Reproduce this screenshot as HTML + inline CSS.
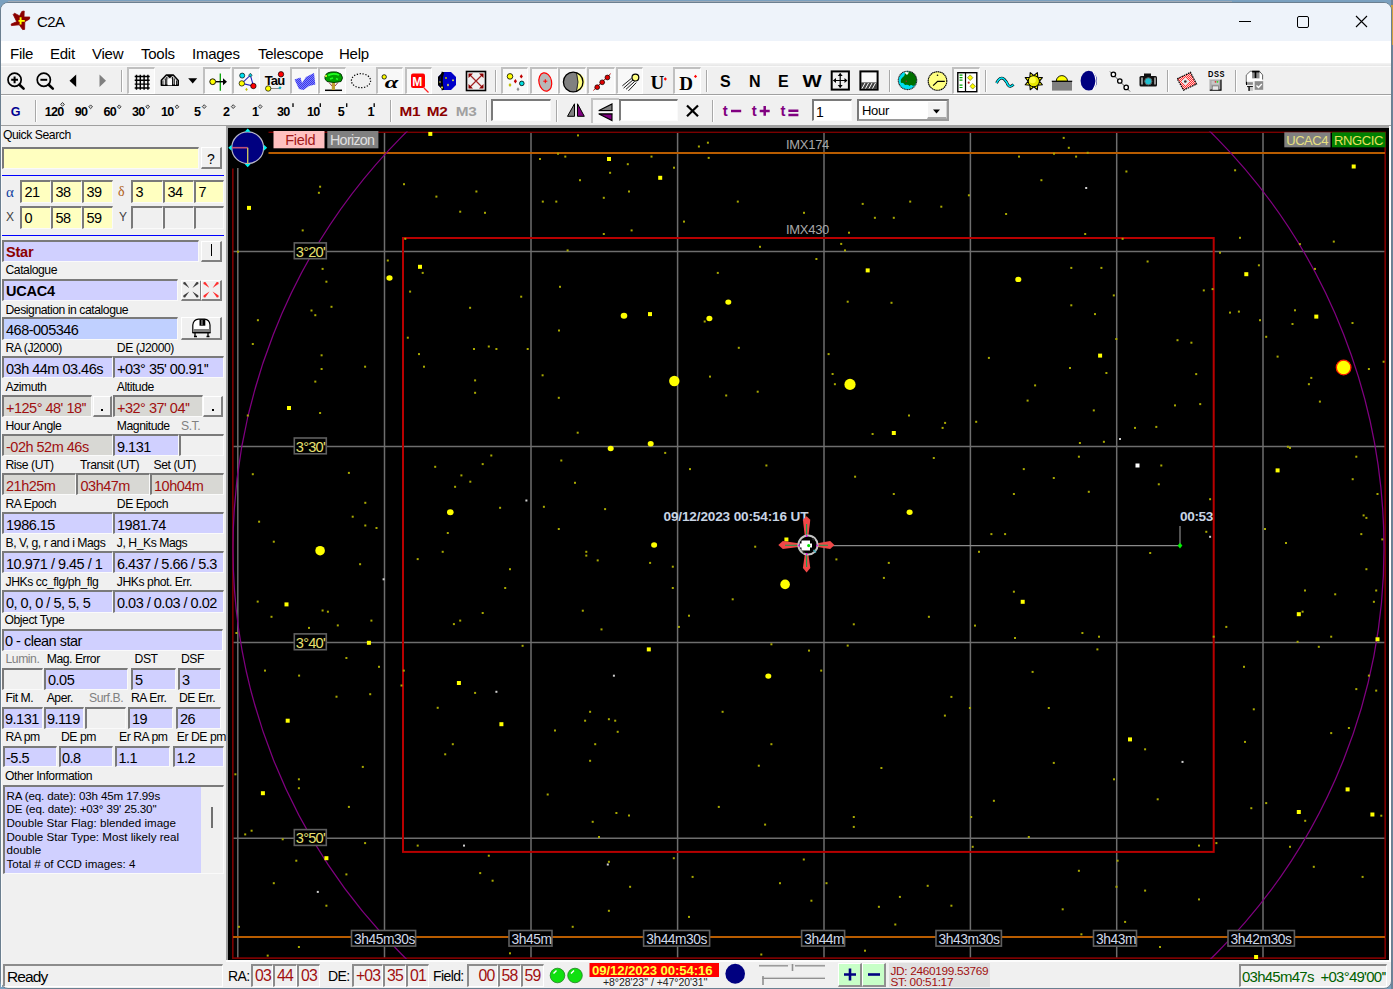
<!DOCTYPE html>
<html><head><meta charset="utf-8"><style>
html,body{margin:0;padding:0;width:1393px;height:989px;overflow:hidden;background:#f0f0f0;font-family:"Liberation Sans", sans-serif;}
#root{position:relative;width:1393px;height:989px;overflow:hidden}
#root div,#root span{position:absolute;white-space:pre;line-height:normal}
svg{position:absolute;left:0;top:0}
</style></head><body><div id="root">
<div style="left:0px;top:0px;width:1393px;height:989px;background:#7aa0bf"></div>
<div style="left:1391px;top:0px;width:2px;height:989px;background:#6c8499"></div>
<div style="left:1391px;top:5px;width:2px;height:40px;background:#d0a040"></div>
<div style="left:8px;top:1px;width:1224px;height:2px;background:linear-gradient(#8a98a8,#e0e0e0)"></div>
<div style="left:0px;top:2px;width:1392px;height:987px;background:#f0f0f0;border-radius:8px 8px 8px 8px;border:1px solid #6b7f90;box-sizing:border-box;overflow:hidden"></div>
<div style="left:1px;top:3px;width:1390px;height:38px;background:#eef3fa;border-radius:7px 7px 0 0"></div>
<svg style="position:absolute;left:0px;top:0px" width="40" height="40" viewBox="0 0 40 40"><path d="M21.8 11.5L24.2 11L24 17L29.8 17L29.3 19.2L24.8 21.7L24.6 29.4L22.6 29.6L19.3 24.8L11.4 25.6L11.2 24L16.7 21.7L13.2 14.5L14.5 13.2L19.6 15.9Z" fill="#8b0000" stroke="#8b0000" stroke-width="0.8" stroke-linejoin="round"/><path d="M18.5 20.9H24.8M20.6 17.2V24.6" stroke="#ffff00" stroke-width="1.9"/></svg>
<span style="left:37px;top:13.42px;font-size:15px;color:#000;font-weight:normal;letter-spacing:-0.6px">C2A</span>
<div style="left:1239px;top:21px;width:12px;height:1px;background:#000"></div>
<div style="left:1297px;top:16px;width:12px;height:12px;border:1px solid #000;border-radius:2px;box-sizing:border-box"></div>
<svg style="position:absolute;left:1355px;top:15px" width="13" height="13" viewBox="0 0 13 13"><path d="M1 1 L12 12 M12 1 L1 12" stroke="#000" stroke-width="1.1"/></svg>
<div style="left:1px;top:41px;width:1390px;height:22px;background:#fff"></div>
<div style="left:1px;top:63px;width:1390px;height:3px;background:linear-gradient(#f4f4f4,#e6e6e6)"></div>
<div style="left:1px;top:66px;width:1390px;height:1px;background:#fafafa"></div>
<span style="left:10px;top:45.42px;font-size:15px;color:#000;font-weight:normal;letter-spacing:-0.25px">File</span>
<span style="left:50px;top:45.42px;font-size:15px;color:#000;font-weight:normal;letter-spacing:-0.25px">Edit</span>
<span style="left:92px;top:45.42px;font-size:15px;color:#000;font-weight:normal;letter-spacing:-0.25px">View</span>
<span style="left:141px;top:45.42px;font-size:15px;color:#000;font-weight:normal;letter-spacing:-0.25px">Tools</span>
<span style="left:192px;top:45.42px;font-size:15px;color:#000;font-weight:normal;letter-spacing:-0.25px">Images</span>
<span style="left:258px;top:45.42px;font-size:15px;color:#000;font-weight:normal;letter-spacing:-0.25px">Telescope</span>
<span style="left:339px;top:45.42px;font-size:15px;color:#000;font-weight:normal;letter-spacing:-0.25px">Help</span>
<div style="left:1px;top:94px;width:1390px;height:1px;background:#a0a0a0"></div>
<div style="left:1px;top:95px;width:1390px;height:1px;background:#fff"></div>
<div style="left:1px;top:125px;width:1390px;height:1px;background:#a0a0a0"></div>
<div style="left:127px;top:67px;width:28px;height:27px;background:#f8f8f8;border-top:2px solid #c0c0c0;border-left:2px solid #c0c0c0;border-right:1px solid #fff;border-bottom:1px solid #fff;box-sizing:border-box"></div>
<div style="left:203px;top:67px;width:28px;height:27px;background:#f8f8f8;border-top:2px solid #c0c0c0;border-left:2px solid #c0c0c0;border-right:1px solid #fff;border-bottom:1px solid #fff;box-sizing:border-box"></div>
<div style="left:232px;top:67px;width:28px;height:27px;background:#f8f8f8;border-top:2px solid #c0c0c0;border-left:2px solid #c0c0c0;border-right:1px solid #fff;border-bottom:1px solid #fff;box-sizing:border-box"></div>
<div style="left:290px;top:67px;width:28px;height:27px;background:#f8f8f8;border-top:2px solid #c0c0c0;border-left:2px solid #c0c0c0;border-right:1px solid #fff;border-bottom:1px solid #fff;box-sizing:border-box"></div>
<div style="left:318px;top:67px;width:28px;height:27px;background:#f8f8f8;border-top:2px solid #c0c0c0;border-left:2px solid #c0c0c0;border-right:1px solid #fff;border-bottom:1px solid #fff;box-sizing:border-box"></div>
<div style="left:376px;top:67px;width:27px;height:27px;background:#f8f8f8;border-top:2px solid #c0c0c0;border-left:2px solid #c0c0c0;border-right:1px solid #fff;border-bottom:1px solid #fff;box-sizing:border-box"></div>
<div style="left:405px;top:67px;width:27px;height:27px;background:#f8f8f8;border-top:2px solid #c0c0c0;border-left:2px solid #c0c0c0;border-right:1px solid #fff;border-bottom:1px solid #fff;box-sizing:border-box"></div>
<div style="left:501px;top:67px;width:27px;height:27px;background:#f8f8f8;border-top:2px solid #c0c0c0;border-left:2px solid #c0c0c0;border-right:1px solid #fff;border-bottom:1px solid #fff;box-sizing:border-box"></div>
<div style="left:530px;top:67px;width:28px;height:27px;background:#f8f8f8;border-top:2px solid #c0c0c0;border-left:2px solid #c0c0c0;border-right:1px solid #fff;border-bottom:1px solid #fff;box-sizing:border-box"></div>
<div style="left:558px;top:67px;width:28px;height:27px;background:#f8f8f8;border-top:2px solid #c0c0c0;border-left:2px solid #c0c0c0;border-right:1px solid #fff;border-bottom:1px solid #fff;box-sizing:border-box"></div>
<div style="left:587px;top:67px;width:28px;height:27px;background:#f8f8f8;border-top:2px solid #c0c0c0;border-left:2px solid #c0c0c0;border-right:1px solid #fff;border-bottom:1px solid #fff;box-sizing:border-box"></div>
<div style="left:616px;top:67px;width:27px;height:27px;background:#f8f8f8;border-top:2px solid #c0c0c0;border-left:2px solid #c0c0c0;border-right:1px solid #fff;border-bottom:1px solid #fff;box-sizing:border-box"></div>
<div style="left:673px;top:67px;width:28px;height:27px;background:#f8f8f8;border-top:2px solid #c0c0c0;border-left:2px solid #c0c0c0;border-right:1px solid #fff;border-bottom:1px solid #fff;box-sizing:border-box"></div>
<div style="left:952px;top:67px;width:28px;height:27px;background:#f8f8f8;border-top:2px solid #c0c0c0;border-left:2px solid #c0c0c0;border-right:1px solid #fff;border-bottom:1px solid #fff;box-sizing:border-box"></div>
<div style="left:121px;top:70px;width:1px;height:22px;background:#a8a8a8"></div>
<div style="left:122px;top:70px;width:1px;height:22px;background:#fff"></div>
<div style="left:495px;top:70px;width:1px;height:22px;background:#a8a8a8"></div>
<div style="left:496px;top:70px;width:1px;height:22px;background:#fff"></div>
<div style="left:706px;top:70px;width:1px;height:22px;background:#a8a8a8"></div>
<div style="left:707px;top:70px;width:1px;height:22px;background:#fff"></div>
<div style="left:889px;top:70px;width:1px;height:22px;background:#a8a8a8"></div>
<div style="left:890px;top:70px;width:1px;height:22px;background:#fff"></div>
<div style="left:985px;top:70px;width:1px;height:22px;background:#a8a8a8"></div>
<div style="left:986px;top:70px;width:1px;height:22px;background:#fff"></div>
<div style="left:1167px;top:70px;width:1px;height:22px;background:#a8a8a8"></div>
<div style="left:1168px;top:70px;width:1px;height:22px;background:#fff"></div>
<div style="left:1235px;top:70px;width:1px;height:22px;background:#a8a8a8"></div>
<div style="left:1236px;top:70px;width:1px;height:22px;background:#fff"></div>
<svg style="position:absolute;left:0px;top:0px" width="1393" height="989" viewBox="0 0 1393 989"><circle cx="14.6" cy="79.8" r="6.6" fill="none" stroke="#000" stroke-width="1.7"/><path d="M11.2 79.8h6.8M14.6 76.4v6.8" stroke="#000" stroke-width="2"/><path d="M19.5 84.7L23.6 88.6" stroke="#000" stroke-width="2.6" stroke-linecap="round"/><circle cx="43.8" cy="79.8" r="6.6" fill="none" stroke="#000" stroke-width="1.7"/><path d="M40.4 79.8h6.8" stroke="#000" stroke-width="2"/><path d="M48.7 84.7L52.8 88.6" stroke="#000" stroke-width="2.6" stroke-linecap="round"/><path d="M69.5 80.8L76.2 74.6V87.1Z" fill="#000"/><path d="M99.5 74.6L106 80.8L99.5 87.1Z" fill="#808080"/><path d="M136.5 74.7v15M140.3 74.7v15M144.1 74.7v15M147.9 74.7v15M134.7 76.5h15M134.7 80.3h15M134.7 84.1h15M134.7 87.9h15" stroke="#000" stroke-width="1.45"/><path d="M161.3 85.3V80.3L166.3 75H173.3L178.3 80.5V85.3Z" fill="#c8c8c8" stroke="#000" stroke-width="1.4" stroke-linejoin="round"/><path d="M163 85V80.5M165.3 85V78.5M166.8 85V77M172.5 85V77M174.2 85V78.5M176.6 85V80.5" stroke="#000" stroke-width="0.9"/><path d="M164.2 85V80M175.5 85V80" stroke="#fff" stroke-width="0.8"/><path d="M167.6 85.2V79.5L169.8 78L172 79.5V85.2Z" fill="#fff"/><path d="M166.3 75H173.3L169.8 78.3Z" fill="#000"/><path d="M188.2 78.3H197.2L192.7 83.4Z" fill="#000"/><path d="M220.3 73.5V90.7" stroke="#00a000" stroke-width="1.3"/><path d="M216 81.7H224" stroke="#000" stroke-width="1.4"/><path d="M223 78.2L227 81.7L223 85.2Z" fill="#000"/><circle cx="212.7" cy="81.7" r="2.9" fill="#ffff00" stroke="#000" stroke-width="0.9"/><path d="M241.8 83.4L253.4 86L250.4 75.2Z" fill="none" stroke="#2020c0" stroke-width="1.1"/><circle cx="242.2" cy="75.6" r="2.5" fill="#00e0f0" stroke="#000" stroke-width="0.7"/><path d="M250.4 73.2L252.2 75.2L250.4 77.2L248.6 75.2Z" fill="#00c0d0" stroke="#000" stroke-width="0.5"/><circle cx="241.8" cy="83.4" r="2.7" fill="#ffff00" stroke="#000" stroke-width="0.7"/><circle cx="253.4" cy="86" r="2.7" fill="#ff0000" stroke="#000" stroke-width="0.7"/><path d="M246.5 87.7L247.8 89.4L246.5 91.1L245.2 89.4Z" fill="#c0c000"/><text x="264.8" y="84.8" font-family="Liberation Sans" font-weight="bold" font-size="13" letter-spacing="-0.9" fill="#000">Tau</text><circle cx="281" cy="74.3" r="2.7" fill="#ff0000" stroke="#000" stroke-width="0.7"/><path d="M268 88.5H280" stroke="#888" stroke-width="1"/><circle cx="268.2" cy="88.5" r="2.7" fill="#ffff00" stroke="#000" stroke-width="0.7"/><path d="M280 86.2L281.6 87.8L280 89.4L278.4 87.8Z" fill="#00b0c0"/><pattern id="chk" width="2" height="2" patternUnits="userSpaceOnUse"><rect width="2" height="2" fill="#8080ff"/><rect width="1" height="1" fill="#3a3ae8"/><rect x="1" y="1" width="1" height="1" fill="#3a3ae8"/></pattern><path d="M294.5 79.5L300.5 77.5L302 83L306 77L314 73L315.3 84.5L309 86L303.5 90L299 89Z" fill="url(#chk)"/><path d="M325 90.3H342" stroke="#000" stroke-width="1.5"/><path d="M331.8 90V81H335V90Z" fill="#c0a030"/><path d="M329 82.5L332 86M338 82.5L335 86" stroke="#a04040" stroke-width="1"/><path d="M325 79Q324 73 331 72Q337 71 341 74Q344 78 341 81.5Q334 83.5 327 81.5Z" fill="#00a000" stroke="#003000" stroke-width="0.9"/><path d="M328 75.5Q333 72.5 339 75M330 79l3-1M336 78.5l2 1" stroke="#20ff20" stroke-width="1.6" fill="none"/><circle cx="326" cy="76" r="1" fill="#ffff40"/><ellipse cx="361" cy="80.7" rx="9.6" ry="7" fill="none" stroke="#000" stroke-width="1.2" stroke-dasharray="1.3 1.6"/><circle cx="384.2" cy="76.9" r="2.2" fill="#ffff00" stroke="#000" stroke-width="0.8"/><text x="0" y="0" transform="translate(384.8 88.3) scale(1.45 1)" font-family="Liberation Serif" font-style="italic" font-weight="bold" font-size="17" fill="#000">α</text><rect x="411" y="73.5" width="14" height="14.5" rx="2" fill="#ff0000"/><text x="412.3" y="85.7" font-family="Liberation Sans" font-weight="bold" font-size="12" fill="#fff">M</text><path d="M424 88L428.5 92.5" stroke="#ff2020" stroke-width="1.3"/><path d="M443 72H451L456 77V85L451 90H443L438 85V77Z" fill="#0000c8"/><path d="M443 72Q436 81 443 90L438 85V77Z" fill="#000"/><path d="M443 72Q440 81 443 90" stroke="#000" stroke-width="2.5" fill="none"/><circle cx="446" cy="78" r="1" fill="#c0c000"/><path d="M448 83.5l1 1.5l-1 1.5l-1-1.5zM442 86l1 1.5l-1 1.5l-1-1.5zM453 79l1 1.3l-1 1.3l-1-1.3zM440 81l0.8 1l-0.8 1l-0.8-1z" fill="#ffff40"/><rect x="466.5" y="71.5" width="19" height="19" fill="#f0f0f0" stroke="#000" stroke-width="1.6"/><path d="M469.5 74.5L482.5 87.5M482.5 74.5L469.5 87.5" stroke="#a02020" stroke-width="1.2"/><path d="M468.5 73.5h4.5l-4.5 4.5zM483.5 73.5h-4.5l4.5 4.5zM468.5 88.5h4.5l-4.5-4.5zM483.5 88.5h-4.5l4.5-4.5z" fill="#8b0000"/><circle cx="510" cy="76.4" r="2.8" fill="#ffff00" stroke="#000" stroke-width="0.8"/><path d="M521.3 74.2l1.6 2.2l-1.6 2.2l-1.6-2.2zM515.4 79l1.6 2.2l-1.6 2.2l-1.6-2.2z" fill="#c00000"/><circle cx="521.8" cy="83.4" r="2.3" fill="#00e0e0" stroke="#000" stroke-width="0.8"/><path d="M510 83l1.5 2l-1.5 2l-1.5-2z" fill="#c0c000"/><path d="M518 87.3l1.5 2l-1.5 2l-1.5-2z" fill="#909090"/><ellipse cx="545.3" cy="82" rx="6.3" ry="9.3" transform="rotate(-12 545.3 82)" fill="#b8b8b8" stroke="#ff0000" stroke-width="1.2"/><path d="M543.3 81.2h4M545.3 79.2v4" stroke="#ff0000" stroke-width="1"/><circle cx="573.2" cy="82" r="9.8" fill="#808080"/><path d="M576.5 72.5A9.6 9.6 0 0 1 576.5 91.5Q580 82 576.5 72.5Z" fill="#ffff80"/><circle cx="573.2" cy="82" r="9.8" fill="none" stroke="#000" stroke-width="1.3"/><path d="M576.5 73Q579.5 82 576.5 91" stroke="#000" stroke-width="0.7" fill="none"/><path d="M593.4 90.4L610.7 73.7" stroke="#c00000" stroke-width="1"/><circle cx="597.2" cy="87.2" r="2.4" fill="#e00000" stroke="#000" stroke-width="0.7"/><circle cx="602.2" cy="82.3" r="2.4" fill="#e00000" stroke="#000" stroke-width="0.7"/><circle cx="607.4" cy="77.5" r="2.4" fill="#e00000" stroke="#000" stroke-width="0.7"/><path d="M631.5 78.3L622.4 85.8M633 79.9L623.6 88.1M634.7 81.4L626 89.3M636.3 82.6L628.4 90.9" stroke="#000" stroke-width="0.9"/><circle cx="635.4" cy="77.6" r="3.4" fill="#ffff80" stroke="#000" stroke-width="1.2"/><text x="650.5" y="88.8" font-family="Liberation Serif" font-weight="bold" font-size="19" fill="#000">U</text><path d="M665.3 77.3l1.6 1.7l-1.6 1.7l-1.6-1.7z" fill="#ff0000"/><text x="679.3" y="89.8" font-family="Liberation Serif" font-weight="bold" font-size="19" fill="#000">D</text><path d="M695.5 74.7l1.6 1.7l-1.6 1.7l-1.6-1.7z" fill="#ff0000"/><text x="720" y="87.3" font-family="Liberation Sans" font-weight="bold" font-size="16" fill="#000">S</text><text x="749" y="87.3" font-family="Liberation Sans" font-weight="bold" font-size="16" fill="#000">N</text><text x="778" y="87.3" font-family="Liberation Sans" font-weight="bold" font-size="16" fill="#000">E</text><text transform="translate(802.4 87.3) scale(1.27 1)" font-family="Liberation Sans" font-weight="bold" font-size="16" fill="#000">W</text><rect x="831.7" y="71.4" width="17.2" height="18.2" fill="#f0f0f0" stroke="#000" stroke-width="2"/><path d="M840.2 73.5v14M833.5 80.5h13.5" stroke="#000" stroke-width="1.2"/><path d="M840.2 73l-2.5 3h5zM840.2 88l-2.5-3h5zM833 80.5l3-2.5v5zM847.5 80.5l-3-2.5v5z" fill="#000"/><rect x="860.4" y="71.4" width="17.2" height="18.2" fill="#f8f8f8" stroke="#000" stroke-width="2"/><rect x="861" y="82.4" width="16" height="6.5" fill="#404040"/><path d="M862 88.5l3-5.5M865.5 88.5l3-5.5M869 88.5l3-5.5M872.5 88.5l3-5.5" stroke="#fff" stroke-width="1"/><circle cx="907.5" cy="80.4" r="9.2" fill="#00e0f0"/><path d="M905 72Q910 71 913 73Q917 76 916.5 81Q916 85 913 86Q911 84 909.5 86Q908 84 905 85Q903 82 901 83Q900 79 903 77Q905 76 905 72Z" fill="#007000"/><path d="M904 72.2Q907 71.5 909 72.5L907 75Z" fill="#fff"/><circle cx="906.3" cy="81.3" r="0.8" fill="#a02020"/><circle cx="907.5" cy="80.4" r="9.2" fill="none" stroke="#202020" stroke-width="1.1" stroke-dasharray="1.2 0.5"/><circle cx="937.5" cy="81" r="9.3" fill="#ffff80" stroke="#000" stroke-width="1.1" stroke-dasharray="1.5 0.4"/><path d="M933.1 85.6L937.6 81.3H944.8" stroke="#000" stroke-width="1.2" fill="none"/><circle cx="937.5" cy="75.2" r="0.8" fill="#000"/><rect x="957.8" y="72.7" width="19" height="19" fill="#fff" stroke="#000" stroke-width="1.4"/><path d="M965.5 72.7v19" stroke="#000" stroke-width="1.2"/><path d="M959.5 75.2h3M959.5 77.7h3M959.5 80.2h3M959.5 85.2h3M959.5 87.5h3" stroke="#00a000" stroke-width="1.2"/><path d="M970.2 74.9l2.7 2.8l-2.7 2.8l-2.7-2.8zM972.7 83.5l2.7 2.8l-2.7 2.8l-2.7-2.8z" fill="#ffff00" stroke="#606000" stroke-width="0.6"/><circle cx="968.7" cy="82.7" r="1.1" fill="#c02020"/><path d="M996.5 83Q1000 76 1004 79Q1007 82 1008 85Q1010 88 1013.5 84.5" fill="none" stroke="#000" stroke-width="2.8"/><path d="M996.5 83Q1000 76 1004 79Q1007 82 1008 85Q1010 88 1013.5 84.5" fill="none" stroke="#00e8f8" stroke-width="1.5"/><path d="M1039.30 81.05L1042.39 84.76L1037.58 85.19ZM1037.79 84.98L1037.36 89.79L1033.65 86.70ZM1033.95 86.70L1030.24 89.79L1029.81 84.98ZM1030.02 85.19L1025.21 84.76L1028.30 81.05ZM1028.30 81.35L1025.21 77.64L1030.02 77.21ZM1029.81 77.42L1030.24 72.61L1033.95 75.70ZM1033.65 75.70L1037.36 72.61L1037.79 77.42ZM1037.58 77.21L1042.39 77.64L1039.30 81.35Z" fill="#ffff00" stroke="#000" stroke-width="1.1" stroke-linejoin="round"/><circle cx="1033.8" cy="81.2" r="5.6" fill="#e8e800" stroke="#000" stroke-width="1"/><circle cx="1032.6" cy="80.0" r="3.2" fill="#ffff40"/><rect x="1052" y="81" width="20" height="9.6" fill="#808080"/><path d="M1051.8 81.3H1072.2" stroke="#000" stroke-width="1.2"/><path d="M1056.3 81A5.6 5.4 0 0 1 1067.5 81Z" fill="#ffff00" stroke="#000" stroke-width="0.9"/><ellipse cx="1088.8" cy="80.7" rx="8.2" ry="9.9" fill="#000080"/><path d="M1093 71.5Q1099 80.7 1093 90" stroke="#fff" stroke-width="1.2" fill="none"/><path d="M1110 71.5L1130 91.5" stroke="#404040" stroke-width="0.9"/><circle cx="1113.4" cy="74.4" r="2.2" fill="#fff" stroke="#000" stroke-width="1.3"/><circle cx="1119.8" cy="81" r="2.2" fill="#fff" stroke="#000" stroke-width="1.3"/><circle cx="1126.2" cy="87.4" r="2.2" fill="#fff" stroke="#000" stroke-width="1.3"/><rect x="1139.5" y="76" width="17.5" height="10.5" rx="1.5" fill="#101010"/><rect x="1144" y="73.5" width="7" height="3" fill="#101010"/><circle cx="1148.3" cy="81.3" r="3.6" fill="#20c0d0" stroke="#606060" stroke-width="1"/><rect x="1141" y="77.5" width="2" height="7" fill="#909090"/><rect x="1154" y="77.5" width="2" height="7" fill="#909090"/><pattern id="rchk" width="2" height="2" patternUnits="userSpaceOnUse"><rect width="2" height="2" fill="#ff3030"/><rect width="1" height="1" fill="#ffd0d0"/><rect x="1" y="1" width="1" height="1" fill="#ffd0d0"/></pattern><path d="M1177.2 78.8L1190.5 72.4L1196.5 84.1L1183.6 90.1Z" fill="url(#rchk)" stroke="#000" stroke-width="1.2" stroke-dasharray="1.6 0.8"/><path d="M1185.3 77.5L1189.3 81.5L1185.3 85.5L1181.3 81.5Z" fill="#e8e8e8"/><circle cx="1185.3" cy="81.5" r="1.3" fill="#303030"/><text x="1208" y="77" font-family="Liberation Sans" font-weight="bold" font-size="7.5" letter-spacing="0.5" fill="#000" transform="translate(1208 77) scale(1 1.15) translate(-1208 -77)">DSS</text><rect x="1209.5" y="79.3" width="11.4" height="11.3" fill="#a8a8a8"/><path d="M1209.8 90.2H1221V79.6" stroke="#000" stroke-width="1.2" fill="none"/><path d="M1209.8 90V79.5H1220.8" stroke="#d0d0d0" stroke-width="0.8" fill="none"/><rect x="1211.5" y="80.8" width="7.5" height="3.8" fill="#c8c8c8"/><circle cx="1215.5" cy="81.8" r="0.9" fill="#e03030"/><circle cx="1217.5" cy="81.8" r="0.9" fill="#20e020"/><rect x="1212.3" y="86" width="6" height="4" fill="#e8e8e8" stroke="#606060" stroke-width="0.5"/><path d="M1246.3 84V75.1L1250.3 71.3H1259.5L1262.6 75.1V79.5" fill="none" stroke="#404040" stroke-width="0.9"/><path d="M1246.8 75.3L1250.5 71.8H1259.3L1262.1 75.3V81H1246.8Z" fill="#fff"/><rect x="1252.1" y="72.2" width="7.4" height="6.2" fill="#8a8a8a"/><path d="M1252.1 71.6H1259.5M1255.5 72V78" stroke="#000" stroke-width="1.6"/><rect x="1246.3" y="82.2" width="6.6" height="2.6" fill="#8c8c8c"/><path d="M1246.5 82V85" stroke="#000" stroke-width="1"/><path d="M1247.1 86.6H1252.9" stroke="#000" stroke-width="1"/><rect x="1248.2" y="87" width="1.8" height="3.9" fill="#303030"/><rect x="1250" y="87" width="2.9" height="3.9" fill="#c8c8c8"/><rect x="1254.7" y="81.2" width="8.5" height="8.6" fill="#8c8c8c"/><path d="M1256.5 85.5L1258.5 87.5L1261.8 84" stroke="#fff" stroke-width="1.3" fill="none"/></svg>
<span style="left:10.8px;top:104.69px;font-size:12.5px;color:#000090;font-weight:bold;">G</span>
<div style="left:35px;top:100px;width:1px;height:22px;background:#a8a8a8"></div>
<div style="left:36px;top:100px;width:1px;height:22px;background:#fff"></div>
<span style="left:44.7px;top:104.80px;font-size:12.6px;color:#000;font-weight:bold;letter-spacing:-0.7px">120</span>
<span style="left:74.8px;top:104.80px;font-size:12.6px;color:#000;font-weight:bold;letter-spacing:-0.7px">90</span>
<span style="left:103.4px;top:104.80px;font-size:12.6px;color:#000;font-weight:bold;letter-spacing:-0.7px">60</span>
<span style="left:132px;top:104.80px;font-size:12.6px;color:#000;font-weight:bold;letter-spacing:-0.7px">30</span>
<span style="left:161px;top:104.80px;font-size:12.6px;color:#000;font-weight:bold;letter-spacing:-0.7px">10</span>
<span style="left:194px;top:104.80px;font-size:12.6px;color:#000;font-weight:bold;letter-spacing:-0.7px">5</span>
<span style="left:223px;top:104.80px;font-size:12.6px;color:#000;font-weight:bold;letter-spacing:-0.7px">2</span>
<span style="left:252px;top:104.80px;font-size:12.6px;color:#000;font-weight:bold;letter-spacing:-0.7px">1</span>
<span style="left:277px;top:104.80px;font-size:12.6px;color:#000;font-weight:bold;letter-spacing:-0.7px">30</span>
<span style="left:307px;top:104.80px;font-size:12.6px;color:#000;font-weight:bold;letter-spacing:-0.7px">10</span>
<span style="left:337.7px;top:104.80px;font-size:12.6px;color:#000;font-weight:bold;letter-spacing:-0.7px">5</span>
<span style="left:367.6px;top:104.80px;font-size:12.6px;color:#000;font-weight:bold;letter-spacing:-0.7px">1</span>
<div style="left:390px;top:100px;width:1px;height:22px;background:#a8a8a8"></div>
<div style="left:391px;top:100px;width:1px;height:22px;background:#fff"></div>
<div style="left:486px;top:100px;width:1px;height:22px;background:#a8a8a8"></div>
<div style="left:487px;top:100px;width:1px;height:22px;background:#fff"></div>
<div style="left:491px;top:99px;width:60px;height:22px;background:#fff;border-top:2px solid #7a7a7a;border-left:2px solid #7a7a7a;border-bottom:1px solid #fafafa;border-right:1px solid #fafafa;box-sizing:border-box"></div>
<div style="left:556px;top:100px;width:1px;height:22px;background:#a8a8a8"></div>
<div style="left:557px;top:100px;width:1px;height:22px;background:#fff"></div>
<div style="left:591px;top:98px;width:28px;height:25px;background:#f7f7f7;border-top:2px solid #c4c4c4;border-left:2px solid #c4c4c4;box-sizing:border-box"></div>
<div style="left:619px;top:99px;width:59px;height:22px;background:#fff;border-top:2px solid #7a7a7a;border-left:2px solid #7a7a7a;border-bottom:1px solid #fafafa;border-right:1px solid #fafafa;box-sizing:border-box"></div>
<div style="left:712px;top:100px;width:1px;height:22px;background:#a8a8a8"></div>
<div style="left:713px;top:100px;width:1px;height:22px;background:#fff"></div>
<div style="left:812px;top:99px;width:40px;height:22px;background:#fff;border-top:2px solid #7a7a7a;border-left:2px solid #7a7a7a;border-bottom:1px solid #fafafa;border-right:1px solid #fafafa;box-sizing:border-box"></div>
<span style="left:816px;top:103.83px;font-size:14px;color:#000;font-weight:normal;">1</span>
<div style="left:857px;top:99px;width:92px;height:22px;background:#fff;border-top:2px solid #7a7a7a;border-left:2px solid #7a7a7a;border-bottom:2px solid #9a9a9a;border-right:2px solid #9a9a9a;box-sizing:border-box"></div>
<span style="left:862px;top:103.44px;font-size:13px;color:#000;font-weight:normal;letter-spacing:-0.3px">Hour</span>
<div style="left:927px;top:101px;width:20px;height:18px;background:#f4f4f4;border-top:1px solid #fff;border-left:1px solid #fff;border-bottom:2px solid #a8a8a8;border-right:1px solid #d0d0d0;box-sizing:border-box"></div>
<svg style="position:absolute;left:0px;top:0px" width="1393" height="989" viewBox="0 0 1393 989"><path d="M62.5 102.5l1.9 1.9l-1.9 1.9l-1.9-1.9z" fill="#d0d0d0" stroke="#303030" stroke-width="0.9"/><path d="M90.6 104.89999999999999l1.9 1.9l-1.9 1.9l-1.9-1.9z" fill="#d0d0d0" stroke="#303030" stroke-width="0.9"/><path d="M119.2 104.89999999999999l1.9 1.9l-1.9 1.9l-1.9-1.9z" fill="#d0d0d0" stroke="#303030" stroke-width="0.9"/><path d="M147.7 104.89999999999999l1.9 1.9l-1.9 1.9l-1.9-1.9z" fill="#d0d0d0" stroke="#303030" stroke-width="0.9"/><path d="M177 104.89999999999999l1.9 1.9l-1.9 1.9l-1.9-1.9z" fill="#d0d0d0" stroke="#303030" stroke-width="0.9"/><path d="M204.2 104.69999999999999l1.9 1.9l-1.9 1.9l-1.9-1.9z" fill="#d0d0d0" stroke="#303030" stroke-width="0.9"/><path d="M233.2 104.69999999999999l1.9 1.9l-1.9 1.9l-1.9-1.9z" fill="#d0d0d0" stroke="#303030" stroke-width="0.9"/><path d="M260.2 104.69999999999999l1.9 1.9l-1.9 1.9l-1.9-1.9z" fill="#d0d0d0" stroke="#303030" stroke-width="0.9"/><path d="M293 103.3v3.8" stroke="#101010" stroke-width="1.4"/><path d="M320.3 103.3v3.8" stroke="#101010" stroke-width="1.4"/><path d="M346.7 103.3v3.8" stroke="#101010" stroke-width="1.4"/><path d="M374.2 103.3v3.8" stroke="#101010" stroke-width="1.4"/><text transform="translate(399.5 116.2) scale(1.28 1)" font-family="Liberation Sans" font-weight="bold" font-size="12" letter-spacing="-0.3" fill="#8b0000">M1</text><text transform="translate(426.8 116.2) scale(1.28 1)" font-family="Liberation Sans" font-weight="bold" font-size="12" letter-spacing="-0.3" fill="#8b0000">M2</text><text transform="translate(455.8 116.2) scale(1.28 1)" font-family="Liberation Sans" font-weight="bold" font-size="12" letter-spacing="-0.3" fill="#a0a0a0">M3</text><path d="M567.5 116.3L574.5 103.8V116.3Z" fill="#808080" stroke="#000" stroke-width="1"/><path d="M577.5 103.8L584.3 116.3H577.5Z" fill="#800080" stroke="#000" stroke-width="1"/><path d="M612 104V110.5H599Z" fill="#808080" stroke="#000" stroke-width="1.1"/><path d="M612 120.5V114H599Z" fill="#800080" stroke="#000" stroke-width="1.1"/><path d="M598.5 110.7H612.5M598.5 113.8H612.5" stroke="#000" stroke-width="0.8"/><path d="M687 105.5L698 116.3M698 105.5L687 116.3" stroke="#000" stroke-width="2.2"/><text x="722.8" y="116.2" font-family="Liberation Sans" font-weight="bold" font-size="15" fill="#800080">t</text><text x="751.8" y="116.2" font-family="Liberation Sans" font-weight="bold" font-size="15" fill="#800080">t</text><text x="780.6" y="116.2" font-family="Liberation Sans" font-weight="bold" font-size="15" fill="#800080">t</text><path d="M731 110.9H741.2M759.7 110.9H769.7M764.7 106V115.8M788.4 110.7H798.4M788.4 114.9H798.4" stroke="#800080" stroke-width="2.5"/><path d="M933 109.5H940L936.5 113.5Z" fill="#000"/></svg>
<span style="left:3px;top:127.96px;font-size:12.2px;color:#000;font-weight:normal;letter-spacing:-0.45px">Quick Search</span>
<div style="left:2px;top:147px;width:197px;height:22px;background:#ffffc0;border-top:2px solid #7a7a7a;border-left:2px solid #7a7a7a;border-bottom:1px solid #fafafa;border-right:1px solid #fafafa;box-sizing:border-box"></div>
<div style="left:201px;top:147px;width:21px;height:22px;background:#f0f0f0;border-top:1px solid #fff;border-left:1px solid #fff;border-bottom:2px solid #808080;border-right:2px solid #808080;box-sizing:border-box"></div>
<span style="left:207px;top:151.33px;font-size:14px;color:#000;font-weight:normal;">?</span>
<div style="left:2px;top:174.6px;width:222px;height:1.6px;background:#0000ff"></div>
<svg style="position:absolute;left:0px;top:0px" width="1393" height="989" viewBox="0 0 1393 989"><text x="6" y="197" font-family="Liberation Serif" font-size="15" fill="#1040a0">α</text><text x="118" y="196" font-family="Liberation Serif" font-size="14" fill="#b06020">δ</text></svg>
<div style="left:20px;top:180px;width:31px;height:23px;background:#ffffc0;border-top:2px solid #7a7a7a;border-left:2px solid #7a7a7a;border-bottom:1px solid #fafafa;border-right:1px solid #fafafa;box-sizing:border-box"></div>
<div style="left:51px;top:180px;width:31px;height:23px;background:#ffffc0;border-top:2px solid #7a7a7a;border-left:2px solid #7a7a7a;border-bottom:1px solid #fafafa;border-right:1px solid #fafafa;box-sizing:border-box"></div>
<div style="left:82px;top:180px;width:31px;height:23px;background:#ffffc0;border-top:2px solid #7a7a7a;border-left:2px solid #7a7a7a;border-bottom:1px solid #fafafa;border-right:1px solid #fafafa;box-sizing:border-box"></div>
<div style="left:131px;top:180px;width:32px;height:23px;background:#ffffc0;border-top:2px solid #7a7a7a;border-left:2px solid #7a7a7a;border-bottom:1px solid #fafafa;border-right:1px solid #fafafa;box-sizing:border-box"></div>
<div style="left:163px;top:180px;width:31px;height:23px;background:#ffffc0;border-top:2px solid #7a7a7a;border-left:2px solid #7a7a7a;border-bottom:1px solid #fafafa;border-right:1px solid #fafafa;box-sizing:border-box"></div>
<div style="left:194px;top:180px;width:30px;height:23px;background:#ffffc0;border-top:2px solid #7a7a7a;border-left:2px solid #7a7a7a;border-bottom:1px solid #fafafa;border-right:1px solid #fafafa;box-sizing:border-box"></div>
<span style="left:24.5px;top:184.18px;font-size:14.5px;color:#000;font-weight:normal;letter-spacing:-0.5px">21</span>
<span style="left:55.5px;top:184.18px;font-size:14.5px;color:#000;font-weight:normal;letter-spacing:-0.5px">38</span>
<span style="left:86.5px;top:184.18px;font-size:14.5px;color:#000;font-weight:normal;letter-spacing:-0.5px">39</span>
<span style="left:135.5px;top:184.18px;font-size:14.5px;color:#000;font-weight:normal;letter-spacing:-0.5px">3</span>
<span style="left:167.5px;top:184.18px;font-size:14.5px;color:#000;font-weight:normal;letter-spacing:-0.5px">34</span>
<span style="left:198.5px;top:184.18px;font-size:14.5px;color:#000;font-weight:normal;letter-spacing:-0.5px">7</span>
<span style="left:6px;top:209.64px;font-size:12px;color:#404040;font-weight:normal;">X</span>
<span style="left:119px;top:209.64px;font-size:12px;color:#404040;font-weight:normal;">Y</span>
<div style="left:20px;top:206px;width:31px;height:23px;background:#ffffc0;border-top:2px solid #7a7a7a;border-left:2px solid #7a7a7a;border-bottom:1px solid #fafafa;border-right:1px solid #fafafa;box-sizing:border-box"></div>
<div style="left:51px;top:206px;width:31px;height:23px;background:#ffffc0;border-top:2px solid #7a7a7a;border-left:2px solid #7a7a7a;border-bottom:1px solid #fafafa;border-right:1px solid #fafafa;box-sizing:border-box"></div>
<div style="left:82px;top:206px;width:31px;height:23px;background:#ffffc0;border-top:2px solid #7a7a7a;border-left:2px solid #7a7a7a;border-bottom:1px solid #fafafa;border-right:1px solid #fafafa;box-sizing:border-box"></div>
<div style="left:131px;top:206px;width:32px;height:23px;background:#f0f0f0;border-top:2px solid #7a7a7a;border-left:2px solid #7a7a7a;border-bottom:1px solid #fafafa;border-right:1px solid #fafafa;box-sizing:border-box"></div>
<div style="left:163px;top:206px;width:31px;height:23px;background:#f0f0f0;border-top:2px solid #7a7a7a;border-left:2px solid #7a7a7a;border-bottom:1px solid #fafafa;border-right:1px solid #fafafa;box-sizing:border-box"></div>
<div style="left:194px;top:206px;width:30px;height:23px;background:#f0f0f0;border-top:2px solid #7a7a7a;border-left:2px solid #7a7a7a;border-bottom:1px solid #fafafa;border-right:1px solid #fafafa;box-sizing:border-box"></div>
<span style="left:24.5px;top:210.18px;font-size:14.5px;color:#000;font-weight:normal;letter-spacing:-0.5px">0</span>
<span style="left:55.5px;top:210.18px;font-size:14.5px;color:#000;font-weight:normal;letter-spacing:-0.5px">58</span>
<span style="left:86.5px;top:210.18px;font-size:14.5px;color:#000;font-weight:normal;letter-spacing:-0.5px">59</span>
<div style="left:2px;top:234.6px;width:222px;height:1.6px;background:#0000ff"></div>
<div style="left:2px;top:240px;width:197px;height:22px;background:#d0d0ff;border-top:2px solid #7a7a7a;border-left:2px solid #7a7a7a;border-bottom:1px solid #fafafa;border-right:1px solid #fafafa;box-sizing:border-box"></div>
<span style="left:6px;top:244.38px;font-size:14.5px;color:#8b0000;font-weight:bold;letter-spacing:-0.2px">Star</span>
<div style="left:201px;top:241px;width:21px;height:21px;background:#f0f0f0;border-top:1px solid #fff;border-left:1px solid #fff;border-bottom:2px solid #808080;border-right:2px solid #808080;box-sizing:border-box"></div>
<div style="left:211px;top:244px;width:1.2px;height:12px;background:#000"></div>
<span style="left:5.5px;top:262.56px;font-size:12.2px;color:#000;font-weight:normal;letter-spacing:-0.45px">Catalogue</span>
<div style="left:2px;top:279px;width:176px;height:22px;background:#d0d0ff;border-top:2px solid #7a7a7a;border-left:2px solid #7a7a7a;border-bottom:1px solid #fafafa;border-right:1px solid #fafafa;box-sizing:border-box"></div>
<span style="left:6px;top:283.38px;font-size:14.5px;color:#000;font-weight:bold;letter-spacing:-0.2px">UCAC4</span>
<div style="left:181px;top:280px;width:21px;height:21px;background:#f0f0f0;border-top:1px solid #fff;border-left:1px solid #fff;border-bottom:2px solid #808080;border-right:2px solid #808080;box-sizing:border-box"></div>
<div style="left:201px;top:280px;width:21px;height:21px;background:#f0f0f0;border-top:1px solid #fff;border-left:1px solid #fff;border-bottom:2px solid #808080;border-right:2px solid #808080;box-sizing:border-box"></div>
<span style="left:5.5px;top:302.96px;font-size:12.2px;color:#000;font-weight:normal;letter-spacing:-0.45px">Designation in catalogue</span>
<div style="left:2px;top:317px;width:176px;height:23px;background:#c0d0ff;border-top:2px solid #7a7a7a;border-left:2px solid #7a7a7a;border-bottom:1px solid #fafafa;border-right:1px solid #fafafa;box-sizing:border-box"></div>
<span style="left:6px;top:321.88px;font-size:14.5px;color:#000;font-weight:normal;letter-spacing:-0.5px">468-005346</span>
<div style="left:181px;top:317px;width:41px;height:23px;background:#f0f0f0;border-top:1px solid #fff;border-left:1px solid #fff;border-bottom:2px solid #808080;border-right:2px solid #808080;box-sizing:border-box"></div>
<svg style="position:absolute;left:0px;top:0px" width="1393" height="989" viewBox="0 0 1393 989"><path d="M183.58 284.12L189.30 288.00L185.42 282.28ZM183.20 283.20a1.3 1.3 0 1 0 2.6 0a1.3 1.3 0 1 0 -2.6 0ZM196.28 282.28L192.40 288.00L198.12 284.12ZM195.90 283.20a1.3 1.3 0 1 0 2.6 0a1.3 1.3 0 1 0 -2.6 0ZM185.42 297.12L189.30 291.40L183.58 295.28ZM183.20 296.20a1.3 1.3 0 1 0 2.6 0a1.3 1.3 0 1 0 -2.6 0ZM198.12 295.28L192.40 291.40L196.28 297.12ZM195.90 296.20a1.3 1.3 0 1 0 2.6 0a1.3 1.3 0 1 0 -2.6 0Z" fill="#404040"/><path d="M203.78 284.12L209.50 288.00L205.62 282.28ZM203.40 283.20a1.3 1.3 0 1 0 2.6 0a1.3 1.3 0 1 0 -2.6 0ZM216.48 282.28L212.60 288.00L218.32 284.12ZM216.10 283.20a1.3 1.3 0 1 0 2.6 0a1.3 1.3 0 1 0 -2.6 0ZM205.62 297.12L209.50 291.40L203.78 295.28ZM203.40 296.20a1.3 1.3 0 1 0 2.6 0a1.3 1.3 0 1 0 -2.6 0ZM218.32 295.28L212.60 291.40L216.48 297.12ZM216.10 296.20a1.3 1.3 0 1 0 2.6 0a1.3 1.3 0 1 0 -2.6 0Z" fill="#ff3030"/><path d="M192.8 332.5V325Q193.5 319.5 198.5 319.2H204.5Q209.5 319.5 210 325V332.5Z" fill="#fff" stroke="#000" stroke-width="1.2"/><rect x="199.5" y="319.2" width="5.8" height="6.5" fill="#000"/><rect x="201.2" y="320" width="1.5" height="5" fill="#777"/><rect x="193.3" y="329" width="16.3" height="3.2" fill="#808080"/><path d="M192.5 332.8H210.5" stroke="#000" stroke-width="1.3"/><path d="M195 333v3.5M208 333v3.5M194 336.5h3M206.5 336.5h3" stroke="#000" stroke-width="1.3"/></svg>
<span style="left:5.5px;top:341.16px;font-size:12.2px;color:#000;font-weight:normal;letter-spacing:-0.45px">RA (J2000)</span>
<span style="left:116.8px;top:341.16px;font-size:12.2px;color:#000;font-weight:normal;letter-spacing:-0.45px">DE (J2000)</span>
<div style="left:2px;top:356px;width:111px;height:22px;background:#d0d0ff;border-top:2px solid #7a7a7a;border-left:2px solid #7a7a7a;border-bottom:1px solid #fafafa;border-right:1px solid #fafafa;box-sizing:border-box"></div>
<div style="left:113px;top:356px;width:111px;height:22px;background:#d0d0ff;border-top:2px solid #7a7a7a;border-left:2px solid #7a7a7a;border-bottom:1px solid #fafafa;border-right:1px solid #fafafa;box-sizing:border-box"></div>
<span style="left:6px;top:360.68px;font-size:14.5px;color:#000;font-weight:normal;letter-spacing:-0.5px">03h 44m 03.46s</span>
<span style="left:117px;top:360.68px;font-size:14.5px;color:#000;font-weight:normal;letter-spacing:-0.5px">+03° 35' 00.91''</span>
<span style="left:5.5px;top:380.16px;font-size:12.2px;color:#000;font-weight:normal;letter-spacing:-0.45px">Azimuth</span>
<span style="left:116.8px;top:380.16px;font-size:12.2px;color:#000;font-weight:normal;letter-spacing:-0.45px">Altitude</span>
<div style="left:2px;top:395px;width:90px;height:22px;background:#d8d8d4;border-top:2px solid #7a7a7a;border-left:2px solid #7a7a7a;border-bottom:1px solid #fafafa;border-right:1px solid #fafafa;box-sizing:border-box"></div>
<div style="left:93px;top:396px;width:19px;height:21px;background:#f0f0f0;border-top:1px solid #fff;border-left:1px solid #fff;border-bottom:2px solid #808080;border-right:2px solid #808080;box-sizing:border-box"></div>
<div style="left:113px;top:395px;width:90px;height:22px;background:#d8d8d4;border-top:2px solid #7a7a7a;border-left:2px solid #7a7a7a;border-bottom:1px solid #fafafa;border-right:1px solid #fafafa;box-sizing:border-box"></div>
<div style="left:203px;top:396px;width:20px;height:21px;background:#f0f0f0;border-top:1px solid #fff;border-left:1px solid #fff;border-bottom:2px solid #808080;border-right:2px solid #808080;box-sizing:border-box"></div>
<span style="left:6px;top:399.68px;font-size:14.5px;color:#a01010;font-weight:normal;letter-spacing:-0.5px">+125° 48' 18''</span>
<span style="left:117px;top:399.68px;font-size:14.5px;color:#a01010;font-weight:normal;letter-spacing:-0.5px">+32° 37' 04''</span>
<div style="left:101px;top:409px;width:2px;height:2px;background:#000"></div>
<div style="left:212px;top:409px;width:2px;height:2px;background:#000"></div>
<span style="left:5.5px;top:418.96px;font-size:12.2px;color:#000;font-weight:normal;letter-spacing:-0.45px">Hour Angle</span>
<span style="left:116.8px;top:418.96px;font-size:12.2px;color:#000;font-weight:normal;letter-spacing:-0.45px">Magnitude</span>
<span style="left:181px;top:418.96px;font-size:12.2px;color:#808080;font-weight:normal;letter-spacing:-0.45px">S.T.</span>
<div style="left:2px;top:434px;width:111px;height:22px;background:#d8d8d4;border-top:2px solid #7a7a7a;border-left:2px solid #7a7a7a;border-bottom:1px solid #fafafa;border-right:1px solid #fafafa;box-sizing:border-box"></div>
<div style="left:113px;top:434px;width:66px;height:22px;background:#d0d0ff;border-top:2px solid #7a7a7a;border-left:2px solid #7a7a7a;border-bottom:1px solid #fafafa;border-right:1px solid #fafafa;box-sizing:border-box"></div>
<div style="left:179px;top:434px;width:45px;height:22px;background:#f0f0f0;border-top:2px solid #7a7a7a;border-left:2px solid #7a7a7a;border-bottom:1px solid #fafafa;border-right:1px solid #fafafa;box-sizing:border-box"></div>
<span style="left:6px;top:438.68px;font-size:14.5px;color:#a01010;font-weight:normal;letter-spacing:-0.5px">-02h 52m 46s</span>
<span style="left:117px;top:438.68px;font-size:14.5px;color:#000;font-weight:normal;letter-spacing:-0.5px">9.131</span>
<span style="left:5.5px;top:457.96px;font-size:12.2px;color:#000;font-weight:normal;letter-spacing:-0.45px">Rise (UT)</span>
<span style="left:80px;top:457.96px;font-size:12.2px;color:#000;font-weight:normal;letter-spacing:-0.45px">Transit (UT)</span>
<span style="left:153.5px;top:457.96px;font-size:12.2px;color:#000;font-weight:normal;letter-spacing:-0.45px">Set (UT)</span>
<div style="left:2px;top:473px;width:74px;height:22px;background:#d8d8d4;border-top:2px solid #7a7a7a;border-left:2px solid #7a7a7a;border-bottom:1px solid #fafafa;border-right:1px solid #fafafa;box-sizing:border-box"></div>
<div style="left:76px;top:473px;width:74px;height:22px;background:#d8d8d4;border-top:2px solid #7a7a7a;border-left:2px solid #7a7a7a;border-bottom:1px solid #fafafa;border-right:1px solid #fafafa;box-sizing:border-box"></div>
<div style="left:150px;top:473px;width:74px;height:22px;background:#d8d8d4;border-top:2px solid #7a7a7a;border-left:2px solid #7a7a7a;border-bottom:1px solid #fafafa;border-right:1px solid #fafafa;box-sizing:border-box"></div>
<span style="left:6px;top:477.68px;font-size:14.5px;color:#a01010;font-weight:normal;letter-spacing:-0.5px">21h25m</span>
<span style="left:80.5px;top:477.68px;font-size:14.5px;color:#a01010;font-weight:normal;letter-spacing:-0.5px">03h47m</span>
<span style="left:154px;top:477.68px;font-size:14.5px;color:#a01010;font-weight:normal;letter-spacing:-0.5px">10h04m</span>
<span style="left:5.5px;top:496.96px;font-size:12.2px;color:#000;font-weight:normal;letter-spacing:-0.45px">RA Epoch</span>
<span style="left:116.8px;top:496.96px;font-size:12.2px;color:#000;font-weight:normal;letter-spacing:-0.45px">DE Epoch</span>
<div style="left:2px;top:512px;width:111px;height:22px;background:#d0d0ff;border-top:2px solid #7a7a7a;border-left:2px solid #7a7a7a;border-bottom:1px solid #fafafa;border-right:1px solid #fafafa;box-sizing:border-box"></div>
<div style="left:113px;top:512px;width:111px;height:22px;background:#d0d0ff;border-top:2px solid #7a7a7a;border-left:2px solid #7a7a7a;border-bottom:1px solid #fafafa;border-right:1px solid #fafafa;box-sizing:border-box"></div>
<span style="left:6px;top:516.68px;font-size:14.5px;color:#000;font-weight:normal;letter-spacing:-0.5px">1986.15</span>
<span style="left:117px;top:516.68px;font-size:14.5px;color:#000;font-weight:normal;letter-spacing:-0.5px">1981.74</span>
<span style="left:5.5px;top:535.76px;font-size:12.2px;color:#000;font-weight:normal;letter-spacing:-0.45px">B, V, g, r and i Mags</span>
<span style="left:116.8px;top:535.76px;font-size:12.2px;color:#000;font-weight:normal;letter-spacing:-0.45px">J, H_Ks Mags</span>
<div style="left:2px;top:551px;width:111px;height:22px;overflow:hidden"></div>
<div style="left:2px;top:551px;width:111px;height:22px;background:#d0d0ff;border-top:2px solid #7a7a7a;border-left:2px solid #7a7a7a;border-bottom:1px solid #fafafa;border-right:1px solid #fafafa;box-sizing:border-box"></div>
<div style="left:113px;top:551px;width:111px;height:22px;background:#d0d0ff;border-top:2px solid #7a7a7a;border-left:2px solid #7a7a7a;border-bottom:1px solid #fafafa;border-right:1px solid #fafafa;box-sizing:border-box"></div>
<span style="left:6px;top:555.68px;font-size:14.5px;color:#000;font-weight:normal;letter-spacing:-0.5px;width:105px;overflow:hidden">10.971 / 9.45 / 1</span>
<span style="left:117px;top:555.68px;font-size:14.5px;color:#000;font-weight:normal;letter-spacing:-0.5px;width:105px;overflow:hidden">6.437 / 5.66 / 5.3</span>
<span style="left:5.5px;top:574.56px;font-size:12.2px;color:#000;font-weight:normal;letter-spacing:-0.45px">JHKs cc_flg/ph_flg</span>
<span style="left:116.8px;top:574.56px;font-size:12.2px;color:#000;font-weight:normal;letter-spacing:-0.45px">JHKs phot. Err.</span>
<div style="left:2px;top:590px;width:111px;height:23px;background:#d0d0ff;border-top:2px solid #7a7a7a;border-left:2px solid #7a7a7a;border-bottom:1px solid #fafafa;border-right:1px solid #fafafa;box-sizing:border-box"></div>
<div style="left:113px;top:590px;width:111px;height:23px;background:#d0d0ff;border-top:2px solid #7a7a7a;border-left:2px solid #7a7a7a;border-bottom:1px solid #fafafa;border-right:1px solid #fafafa;box-sizing:border-box"></div>
<span style="left:6px;top:594.88px;font-size:14.5px;color:#000;font-weight:normal;letter-spacing:-0.5px">0, 0, 0 / 5, 5, 5</span>
<span style="left:117px;top:594.88px;font-size:14.5px;color:#000;font-weight:normal;letter-spacing:-0.5px;width:105px;overflow:hidden">0.03 / 0.03 / 0.02</span>
<span style="left:4.5px;top:613.46px;font-size:12.2px;color:#000;font-weight:normal;letter-spacing:-0.45px">Object Type</span>
<div style="left:2px;top:629px;width:221px;height:22px;background:#d0d0ff;border-top:2px solid #7a7a7a;border-left:2px solid #7a7a7a;border-bottom:1px solid #fafafa;border-right:1px solid #fafafa;box-sizing:border-box"></div>
<span style="left:5px;top:633.38px;font-size:14.5px;color:#000;font-weight:normal;letter-spacing:-0.5px">0 - clean star</span>
<span style="left:5.5px;top:652.46px;font-size:12.2px;color:#808080;font-weight:normal;letter-spacing:-0.45px">Lumin.</span>
<span style="left:46.7px;top:652.46px;font-size:12.2px;color:#000;font-weight:normal;letter-spacing:-0.45px">Mag. Error</span>
<span style="left:134.6px;top:652.46px;font-size:12.2px;color:#000;font-weight:normal;letter-spacing:-0.45px">DST</span>
<span style="left:181px;top:652.46px;font-size:12.2px;color:#000;font-weight:normal;letter-spacing:-0.45px">DSF</span>
<div style="left:2px;top:668px;width:41px;height:22px;background:#f0f0f0;border-top:2px solid #7a7a7a;border-left:2px solid #7a7a7a;border-bottom:1px solid #fafafa;border-right:1px solid #fafafa;box-sizing:border-box"></div>
<div style="left:44px;top:668px;width:84px;height:22px;background:#d0d0ff;border-top:2px solid #7a7a7a;border-left:2px solid #7a7a7a;border-bottom:1px solid #fafafa;border-right:1px solid #fafafa;box-sizing:border-box"></div>
<div style="left:131px;top:668px;width:45px;height:22px;background:#d0d0ff;border-top:2px solid #7a7a7a;border-left:2px solid #7a7a7a;border-bottom:1px solid #fafafa;border-right:1px solid #fafafa;box-sizing:border-box"></div>
<div style="left:178px;top:668px;width:43px;height:22px;background:#d0d0ff;border-top:2px solid #7a7a7a;border-left:2px solid #7a7a7a;border-bottom:1px solid #fafafa;border-right:1px solid #fafafa;box-sizing:border-box"></div>
<span style="left:48px;top:672.38px;font-size:14.5px;color:#000;font-weight:normal;letter-spacing:-0.5px">0.05</span>
<span style="left:135px;top:672.38px;font-size:14.5px;color:#000;font-weight:normal;letter-spacing:-0.5px">5</span>
<span style="left:182px;top:672.38px;font-size:14.5px;color:#000;font-weight:normal;letter-spacing:-0.5px">3</span>
<span style="left:5.5px;top:691.36px;font-size:12.2px;color:#000;font-weight:normal;letter-spacing:-0.45px">Fit M.</span>
<span style="left:46.7px;top:691.36px;font-size:12.2px;color:#000;font-weight:normal;letter-spacing:-0.45px">Aper.</span>
<span style="left:89px;top:691.36px;font-size:12.2px;color:#808080;font-weight:normal;letter-spacing:-0.45px">Surf.B.</span>
<span style="left:131px;top:691.36px;font-size:12.2px;color:#000;font-weight:normal;letter-spacing:-0.45px">RA Err.</span>
<span style="left:179px;top:691.36px;font-size:12.2px;color:#000;font-weight:normal;letter-spacing:-0.45px">DE Err.</span>
<div style="left:2px;top:707px;width:41px;height:22px;background:#d0d0ff;border-top:2px solid #7a7a7a;border-left:2px solid #7a7a7a;border-bottom:1px solid #fafafa;border-right:1px solid #fafafa;box-sizing:border-box"></div>
<div style="left:44px;top:707px;width:40px;height:22px;background:#d0d0ff;border-top:2px solid #7a7a7a;border-left:2px solid #7a7a7a;border-bottom:1px solid #fafafa;border-right:1px solid #fafafa;box-sizing:border-box"></div>
<div style="left:85px;top:707px;width:41px;height:22px;background:#f0f0f0;border-top:2px solid #7a7a7a;border-left:2px solid #7a7a7a;border-bottom:1px solid #fafafa;border-right:1px solid #fafafa;box-sizing:border-box"></div>
<div style="left:128px;top:707px;width:45px;height:22px;background:#d0d0ff;border-top:2px solid #7a7a7a;border-left:2px solid #7a7a7a;border-bottom:1px solid #fafafa;border-right:1px solid #fafafa;box-sizing:border-box"></div>
<div style="left:176px;top:707px;width:45px;height:22px;background:#d0d0ff;border-top:2px solid #7a7a7a;border-left:2px solid #7a7a7a;border-bottom:1px solid #fafafa;border-right:1px solid #fafafa;box-sizing:border-box"></div>
<span style="left:5px;top:711.38px;font-size:14.5px;color:#000;font-weight:normal;letter-spacing:-0.5px">9.131</span>
<span style="left:47px;top:711.38px;font-size:14.5px;color:#000;font-weight:normal;letter-spacing:-0.5px">9.119</span>
<span style="left:132px;top:711.38px;font-size:14.5px;color:#000;font-weight:normal;letter-spacing:-0.5px">19</span>
<span style="left:180px;top:711.38px;font-size:14.5px;color:#000;font-weight:normal;letter-spacing:-0.5px">26</span>
<span style="left:5.5px;top:730.26px;font-size:12.2px;color:#000;font-weight:normal;letter-spacing:-0.45px">RA pm</span>
<span style="left:61px;top:730.26px;font-size:12.2px;color:#000;font-weight:normal;letter-spacing:-0.45px">DE pm</span>
<span style="left:119px;top:730.26px;font-size:12.2px;color:#000;font-weight:normal;letter-spacing:-0.45px">Er RA pm</span>
<span style="left:176.8px;top:730.26px;font-size:12.2px;color:#000;font-weight:normal;letter-spacing:-0.45px">Er DE pm</span>
<div style="left:3px;top:746px;width:54px;height:21px;background:#d0d0ff;border-top:2px solid #7a7a7a;border-left:2px solid #7a7a7a;border-bottom:1px solid #fafafa;border-right:1px solid #fafafa;box-sizing:border-box"></div>
<div style="left:59px;top:746px;width:54px;height:21px;background:#d0d0ff;border-top:2px solid #7a7a7a;border-left:2px solid #7a7a7a;border-bottom:1px solid #fafafa;border-right:1px solid #fafafa;box-sizing:border-box"></div>
<div style="left:115px;top:746px;width:55px;height:21px;background:#d0d0ff;border-top:2px solid #7a7a7a;border-left:2px solid #7a7a7a;border-bottom:1px solid #fafafa;border-right:1px solid #fafafa;box-sizing:border-box"></div>
<div style="left:173px;top:746px;width:51px;height:21px;background:#d0d0ff;border-top:2px solid #7a7a7a;border-left:2px solid #7a7a7a;border-bottom:1px solid #fafafa;border-right:1px solid #fafafa;box-sizing:border-box"></div>
<span style="left:6px;top:749.88px;font-size:14.5px;color:#000;font-weight:normal;letter-spacing:-0.5px">-5.5</span>
<span style="left:62px;top:749.88px;font-size:14.5px;color:#000;font-weight:normal;letter-spacing:-0.5px">0.8</span>
<span style="left:118.5px;top:749.88px;font-size:14.5px;color:#000;font-weight:normal;letter-spacing:-0.5px">1.1</span>
<span style="left:176.5px;top:749.88px;font-size:14.5px;color:#000;font-weight:normal;letter-spacing:-0.5px">1.2</span>
<span style="left:5px;top:768.76px;font-size:12.2px;color:#000;font-weight:normal;letter-spacing:-0.45px">Other Information</span>
<div style="left:3px;top:785px;width:221px;height:89px;background:#d0d0ff;border-top:2px solid #7a7a7a;border-left:2px solid #7a7a7a;border-bottom:1px solid #fafafa;border-right:1px solid #fafafa;box-sizing:border-box"></div>
<div style="left:201px;top:787px;width:22px;height:86px;background:#f0f0f0"></div>
<div style="left:211px;top:807px;width:2px;height:21px;background:#707070"></div>
<span style="left:6.5px;top:788.50px;font-size:11.6px;color:#000;font-weight:normal;letter-spacing:-0.15px">RA (eq. date): 03h 45m 17.99s</span>
<span style="left:6.5px;top:802.20px;font-size:11.6px;color:#000;font-weight:normal;letter-spacing:-0.15px">DE (eq. date): +03° 39' 25.30''</span>
<span style="left:6.5px;top:815.90px;font-size:11.6px;color:#000;font-weight:normal;letter-spacing:0px">Double Star Flag: blended image</span>
<span style="left:6.5px;top:829.60px;font-size:11.6px;color:#000;font-weight:normal;letter-spacing:0px">Double Star Type: Most likely real</span>
<span style="left:6.5px;top:843.30px;font-size:11.6px;color:#000;font-weight:normal;letter-spacing:0px">double</span>
<span style="left:6.5px;top:857.00px;font-size:11.6px;color:#000;font-weight:normal;letter-spacing:0px">Total # of CCD images: 4</span>
<div style="left:226px;top:126px;width:1165px;height:2px;background:#a0a0a0"></div>
<div style="left:226px;top:126px;width:2px;height:836px;background:#a0a0a0"></div>
<div style="left:226px;top:960px;width:1165px;height:2px;background:#fcfcfc"></div>
<div style="left:1389px;top:126px;width:2px;height:836px;background:#fcfcfc"></div>
<div style="left:228px;top:128px;width:1161px;height:832px;background:#000"></div>
<svg style="position:absolute;left:0px;top:0px" width="1393" height="989" viewBox="0 0 1393 989"><clipPath id="cc"><rect x="232" y="131.5" width="1154" height="827.5"/></clipPath><g clip-path="url(#cc)"><path d="M237.8 132V958" stroke="#6e6e6e" stroke-width="1.5"/><path d="M384.5 132V958" stroke="#6e6e6e" stroke-width="1.5"/><path d="M531 132V958" stroke="#6e6e6e" stroke-width="1.5"/><path d="M677.6 132V958" stroke="#6e6e6e" stroke-width="1.5"/><path d="M824 132V958" stroke="#6e6e6e" stroke-width="1.5"/><path d="M970.4 132V958" stroke="#6e6e6e" stroke-width="1.5"/><path d="M1116.7 132V958" stroke="#6e6e6e" stroke-width="1.5"/><path d="M1263 132V958" stroke="#6e6e6e" stroke-width="1.5"/><path d="M233 251.5H1385" stroke="#6e6e6e" stroke-width="1.5"/><path d="M233 446.6H1385" stroke="#6e6e6e" stroke-width="1.5"/><path d="M233 642.5H1385" stroke="#6e6e6e" stroke-width="1.5"/><path d="M233 838.2H1385" stroke="#6e6e6e" stroke-width="1.5"/><path d="M268.5 132.2H1385.2V958.2H232.8V168.5" fill="none" stroke="#7a0000" stroke-width="1.7"/><path d="M268.5 153H1385M233 937H1385" stroke="#b85c00" stroke-width="2"/><rect x="403" y="238" width="810.7" height="613.9" fill="none" stroke="#b80000" stroke-width="2"/><path d="M233.0 548.4A575.5 582 0 0 1 1384.0 548.4A575.5 574 0 0 1 233.0 548.4Z" fill="none" stroke="#800080" stroke-width="1.25"/><rect x="319.1" y="185.7" width="2" height="2" fill="#a8a800"/><rect x="317.9" y="191.8" width="2" height="2" fill="#a8a800"/><rect x="301.7" y="229.4" width="2" height="2" fill="#a8a800"/><rect x="237.0" y="250.7" width="2" height="2" fill="#a8a800"/><rect x="403.0" y="183.2" width="2" height="2" fill="#a8a800"/><rect x="435.4" y="195.6" width="2" height="2" fill="#a8a800"/><rect x="475.4" y="190.5" width="2" height="2" fill="#a8a800"/><rect x="459.2" y="210.7" width="2" height="2" fill="#a8a800"/><rect x="484.0" y="211.8" width="2" height="2" fill="#a8a800"/><rect x="404.3" y="237.8" width="2" height="2" fill="#a8a800"/><rect x="386.8" y="259.5" width="2" height="2" fill="#a8a800"/><rect x="421.7" y="271.9" width="2" height="2" fill="#a8a800"/><rect x="321.6" y="267.9" width="2" height="2" fill="#a8a800"/><rect x="325.4" y="280.7" width="2" height="2" fill="#a8a800"/><rect x="409.1" y="290.6" width="2" height="2" fill="#a8a800"/><rect x="330.5" y="305.8" width="2" height="2" fill="#a8a800"/><rect x="310.5" y="309.5" width="2" height="2" fill="#a8a800"/><rect x="314.3" y="314.2" width="2" height="2" fill="#a8a800"/><rect x="256.9" y="319.2" width="2" height="2" fill="#a8a800"/><rect x="469.1" y="306.8" width="2" height="2" fill="#a8a800"/><rect x="577.0" y="134.4" width="2" height="2" fill="#a8a800"/><rect x="697.9" y="145.5" width="2" height="2" fill="#a8a800"/><rect x="706.9" y="141.7" width="2" height="2" fill="#a8a800"/><rect x="557.0" y="152.7" width="2" height="2" fill="#a8a800"/><rect x="539.0" y="158.0" width="2" height="2" fill="#a8a800"/><rect x="564.3" y="155.6" width="2" height="2" fill="#a8a800"/><rect x="650.5" y="155.6" width="2" height="2" fill="#a8a800"/><rect x="626.8" y="163.2" width="2" height="2" fill="#a8a800"/><rect x="673.0" y="166.7" width="2" height="2" fill="#a8a800"/><rect x="707.7" y="156.9" width="2" height="2" fill="#a8a800"/><rect x="609.1" y="171.8" width="2" height="2" fill="#a8a800"/><rect x="579.0" y="179.2" width="2" height="2" fill="#a8a800"/><rect x="628.0" y="190.5" width="2" height="2" fill="#a8a800"/><rect x="602.8" y="196.8" width="2" height="2" fill="#a8a800"/><rect x="541.8" y="200.6" width="2" height="2" fill="#a8a800"/><rect x="555.3" y="200.6" width="2" height="2" fill="#a8a800"/><rect x="736.8" y="200.6" width="2" height="2" fill="#a8a800"/><rect x="803.0" y="211.8" width="2" height="2" fill="#a8a800"/><rect x="683.0" y="220.6" width="2" height="2" fill="#a8a800"/><rect x="630.6" y="229.4" width="2" height="2" fill="#a8a800"/><rect x="602.8" y="233.0" width="2" height="2" fill="#a8a800"/><rect x="566.6" y="249.4" width="2" height="2" fill="#a8a800"/><rect x="759.0" y="245.8" width="2" height="2" fill="#a8a800"/><rect x="716.8" y="271.9" width="2" height="2" fill="#a8a800"/><rect x="559.0" y="285.8" width="2" height="2" fill="#a8a800"/><rect x="520.2" y="295.7" width="2" height="2" fill="#a8a800"/><rect x="703.7" y="320.5" width="2" height="2" fill="#a8a800"/><rect x="558.0" y="329.5" width="2" height="2" fill="#a8a800"/><rect x="1062.7" y="136.9" width="2" height="2" fill="#a8a800"/><rect x="1067.8" y="146.8" width="2" height="2" fill="#a8a800"/><rect x="1053.0" y="152.7" width="2" height="2" fill="#a8a800"/><rect x="1018.0" y="155.6" width="2" height="2" fill="#a8a800"/><rect x="1075.1" y="155.6" width="2" height="2" fill="#a8a800"/><rect x="1086.7" y="151.8" width="2" height="2" fill="#a8a800"/><rect x="1040.4" y="179.2" width="2" height="2" fill="#a8a800"/><rect x="967.9" y="194.3" width="2" height="2" fill="#a8a800"/><rect x="861.7" y="202.9" width="2" height="2" fill="#a8a800"/><rect x="909.2" y="200.6" width="2" height="2" fill="#a8a800"/><rect x="940.3" y="205.7" width="2" height="2" fill="#a8a800"/><rect x="873.9" y="216.8" width="2" height="2" fill="#a8a800"/><rect x="892.8" y="216.8" width="2" height="2" fill="#a8a800"/><rect x="1005.1" y="213.0" width="2" height="2" fill="#a8a800"/><rect x="848.0" y="231.7" width="2" height="2" fill="#a8a800"/><rect x="1084.2" y="233.0" width="2" height="2" fill="#a8a800"/><rect x="840.2" y="242.9" width="2" height="2" fill="#a8a800"/><rect x="844.0" y="249.4" width="2" height="2" fill="#a8a800"/><rect x="815.4" y="258.0" width="2" height="2" fill="#a8a800"/><rect x="1070.3" y="266.9" width="2" height="2" fill="#a8a800"/><rect x="846.7" y="300.7" width="2" height="2" fill="#a8a800"/><rect x="890.5" y="301.8" width="2" height="2" fill="#a8a800"/><rect x="1070.3" y="304.3" width="2" height="2" fill="#a8a800"/><rect x="1094.0" y="313.1" width="2" height="2" fill="#a8a800"/><rect x="1125.4" y="170.5" width="2" height="2" fill="#a8a800"/><rect x="1234.1" y="169.3" width="2" height="2" fill="#a8a800"/><rect x="1121.6" y="237.8" width="2" height="2" fill="#a8a800"/><rect x="1239.0" y="236.8" width="2" height="2" fill="#a8a800"/><rect x="1219.0" y="251.7" width="2" height="2" fill="#a8a800"/><rect x="1332.8" y="240.6" width="2" height="2" fill="#a8a800"/><rect x="1298.9" y="243.1" width="2" height="2" fill="#a8a800"/><rect x="1146.6" y="260.5" width="2" height="2" fill="#a8a800"/><rect x="1100.4" y="266.9" width="2" height="2" fill="#a8a800"/><rect x="1257.9" y="264.3" width="2" height="2" fill="#a8a800"/><rect x="1314.0" y="267.9" width="2" height="2" fill="#a8a800"/><rect x="1112.8" y="294.4" width="2" height="2" fill="#a8a800"/><rect x="1202.8" y="289.4" width="2" height="2" fill="#a8a800"/><rect x="1211.6" y="288.1" width="2" height="2" fill="#a8a800"/><rect x="1229.0" y="311.6" width="2" height="2" fill="#a8a800"/><rect x="1237.9" y="310.6" width="2" height="2" fill="#a8a800"/><rect x="1259.0" y="319.2" width="2" height="2" fill="#a8a800"/><rect x="1294.0" y="309.3" width="2" height="2" fill="#a8a800"/><rect x="1291.5" y="323.0" width="2" height="2" fill="#a8a800"/><rect x="1351.5" y="322.0" width="2" height="2" fill="#a8a800"/><rect x="251.8" y="343.0" width="2" height="2" fill="#a8a800"/><rect x="406.8" y="336.7" width="2" height="2" fill="#a8a800"/><rect x="320.6" y="354.3" width="2" height="2" fill="#a8a800"/><rect x="320.6" y="368.0" width="2" height="2" fill="#a8a800"/><rect x="364.1" y="365.7" width="2" height="2" fill="#a8a800"/><rect x="314.3" y="380.6" width="2" height="2" fill="#a8a800"/><rect x="319.1" y="412.0" width="2" height="2" fill="#a8a800"/><rect x="246.8" y="414.5" width="2" height="2" fill="#a8a800"/><rect x="418.0" y="353.1" width="2" height="2" fill="#a8a800"/><rect x="423.0" y="365.7" width="2" height="2" fill="#a8a800"/><rect x="473.0" y="348.0" width="2" height="2" fill="#a8a800"/><rect x="487.8" y="345.5" width="2" height="2" fill="#a8a800"/><rect x="495.4" y="348.0" width="2" height="2" fill="#a8a800"/><rect x="474.1" y="379.4" width="2" height="2" fill="#a8a800"/><rect x="474.1" y="391.8" width="2" height="2" fill="#a8a800"/><rect x="251.8" y="473.2" width="2" height="2" fill="#a8a800"/><rect x="347.9" y="471.9" width="2" height="2" fill="#a8a800"/><rect x="490.3" y="454.5" width="2" height="2" fill="#a8a800"/><rect x="481.7" y="463.1" width="2" height="2" fill="#a8a800"/><rect x="434.2" y="465.8" width="2" height="2" fill="#a8a800"/><rect x="460.4" y="474.4" width="2" height="2" fill="#a8a800"/><rect x="469.3" y="480.7" width="2" height="2" fill="#a8a800"/><rect x="454.1" y="485.8" width="2" height="2" fill="#a8a800"/><rect x="364.3" y="501.8" width="2" height="2" fill="#a8a800"/><rect x="499.1" y="506.8" width="2" height="2" fill="#a8a800"/><rect x="258.1" y="520.7" width="2" height="2" fill="#a8a800"/><rect x="351.7" y="515.7" width="2" height="2" fill="#a8a800"/><rect x="364.3" y="524.5" width="2" height="2" fill="#a8a800"/><rect x="375.5" y="527.0" width="2" height="2" fill="#a8a800"/><rect x="446.8" y="532.0" width="2" height="2" fill="#a8a800"/><rect x="272.8" y="540.7" width="2" height="2" fill="#a8a800"/><rect x="526.7" y="348.0" width="2" height="2" fill="#a8a800"/><rect x="541.6" y="374.3" width="2" height="2" fill="#a8a800"/><rect x="557.8" y="396.8" width="2" height="2" fill="#a8a800"/><rect x="576.7" y="431.7" width="2" height="2" fill="#a8a800"/><rect x="664.2" y="451.9" width="2" height="2" fill="#a8a800"/><rect x="560.3" y="459.5" width="2" height="2" fill="#a8a800"/><rect x="689.0" y="468.1" width="2" height="2" fill="#a8a800"/><rect x="574.0" y="481.8" width="2" height="2" fill="#a8a800"/><rect x="542.9" y="505.8" width="2" height="2" fill="#a8a800"/><rect x="604.1" y="508.1" width="2" height="2" fill="#a8a800"/><rect x="557.8" y="528.0" width="2" height="2" fill="#a8a800"/><rect x="737.8" y="346.8" width="2" height="2" fill="#a8a800"/><rect x="709.0" y="375.6" width="2" height="2" fill="#a8a800"/><rect x="725.2" y="394.5" width="2" height="2" fill="#a8a800"/><rect x="756.7" y="390.7" width="2" height="2" fill="#a8a800"/><rect x="765.4" y="464.5" width="2" height="2" fill="#a8a800"/><rect x="827.6" y="353.1" width="2" height="2" fill="#a8a800"/><rect x="831.6" y="373.0" width="2" height="2" fill="#a8a800"/><rect x="833.9" y="383.2" width="2" height="2" fill="#a8a800"/><rect x="908.0" y="414.5" width="2" height="2" fill="#a8a800"/><rect x="944.1" y="421.9" width="2" height="2" fill="#a8a800"/><rect x="941.6" y="426.9" width="2" height="2" fill="#a8a800"/><rect x="871.6" y="433.0" width="2" height="2" fill="#a8a800"/><rect x="975.2" y="420.8" width="2" height="2" fill="#a8a800"/><rect x="987.9" y="356.9" width="2" height="2" fill="#a8a800"/><rect x="1069.0" y="367.0" width="2" height="2" fill="#a8a800"/><rect x="1034.1" y="384.4" width="2" height="2" fill="#a8a800"/><rect x="1026.6" y="399.6" width="2" height="2" fill="#a8a800"/><rect x="1092.8" y="409.4" width="2" height="2" fill="#a8a800"/><rect x="1078.9" y="442.0" width="2" height="2" fill="#a8a800"/><rect x="932.8" y="457.0" width="2" height="2" fill="#a8a800"/><rect x="854.1" y="475.7" width="2" height="2" fill="#a8a800"/><rect x="892.8" y="493.0" width="2" height="2" fill="#a8a800"/><rect x="1077.9" y="455.7" width="2" height="2" fill="#a8a800"/><rect x="1022.8" y="468.1" width="2" height="2" fill="#a8a800"/><rect x="1052.8" y="477.0" width="2" height="2" fill="#a8a800"/><rect x="1087.8" y="490.8" width="2" height="2" fill="#a8a800"/><rect x="1012.9" y="493.0" width="2" height="2" fill="#a8a800"/><rect x="990.4" y="533.1" width="2" height="2" fill="#a8a800"/><rect x="1004.1" y="533.1" width="2" height="2" fill="#a8a800"/><rect x="1115.3" y="338.0" width="2" height="2" fill="#a8a800"/><rect x="1176.5" y="339.2" width="2" height="2" fill="#a8a800"/><rect x="1190.4" y="341.7" width="2" height="2" fill="#a8a800"/><rect x="1105.4" y="372.0" width="2" height="2" fill="#a8a800"/><rect x="1195.2" y="373.1" width="2" height="2" fill="#a8a800"/><rect x="1174.0" y="404.4" width="2" height="2" fill="#a8a800"/><rect x="1199.2" y="403.1" width="2" height="2" fill="#a8a800"/><rect x="1134.0" y="426.9" width="2" height="2" fill="#a8a800"/><rect x="1155.3" y="425.9" width="2" height="2" fill="#a8a800"/><rect x="1102.9" y="440.8" width="2" height="2" fill="#a8a800"/><rect x="1265.2" y="335.8" width="2" height="2" fill="#a8a800"/><rect x="1276.6" y="355.6" width="2" height="2" fill="#a8a800"/><rect x="1310.3" y="376.9" width="2" height="2" fill="#a8a800"/><rect x="1307.9" y="383.2" width="2" height="2" fill="#a8a800"/><rect x="1318.9" y="400.6" width="2" height="2" fill="#a8a800"/><rect x="1367.9" y="368.0" width="2" height="2" fill="#a8a800"/><rect x="1382.6" y="360.7" width="2" height="2" fill="#a8a800"/><rect x="1286.9" y="445.8" width="2" height="2" fill="#a8a800"/><rect x="1289.0" y="446.9" width="2" height="2" fill="#a8a800"/><rect x="1160.3" y="464.5" width="2" height="2" fill="#a8a800"/><rect x="1157.8" y="483.3" width="2" height="2" fill="#a8a800"/><rect x="1355.3" y="455.7" width="2" height="2" fill="#a8a800"/><rect x="1351.7" y="478.2" width="2" height="2" fill="#a8a800"/><rect x="1376.5" y="493.0" width="2" height="2" fill="#a8a800"/><rect x="1209.1" y="498.2" width="2" height="2" fill="#a8a800"/><rect x="1205.3" y="530.8" width="2" height="2" fill="#a8a800"/><rect x="1264.0" y="528.0" width="2" height="2" fill="#a8a800"/><rect x="1362.6" y="514.4" width="2" height="2" fill="#a8a800"/><rect x="1365.4" y="516.9" width="2" height="2" fill="#a8a800"/><rect x="1360.3" y="533.1" width="2" height="2" fill="#a8a800"/><rect x="1381.3" y="538.4" width="2" height="2" fill="#a8a800"/><rect x="1285.0" y="542.0" width="2" height="2" fill="#a8a800"/><rect x="359.1" y="563.2" width="2" height="2" fill="#a8a800"/><rect x="256.7" y="600.6" width="2" height="2" fill="#a8a800"/><rect x="270.5" y="615.8" width="2" height="2" fill="#a8a800"/><rect x="321.6" y="609.5" width="2" height="2" fill="#a8a800"/><rect x="326.9" y="610.7" width="2" height="2" fill="#a8a800"/><rect x="336.8" y="624.4" width="2" height="2" fill="#a8a800"/><rect x="308.0" y="626.9" width="2" height="2" fill="#a8a800"/><rect x="370.4" y="619.6" width="2" height="2" fill="#a8a800"/><rect x="235.4" y="632.0" width="2" height="2" fill="#a8a800"/><rect x="345.4" y="657.0" width="2" height="2" fill="#a8a800"/><rect x="378.0" y="665.8" width="2" height="2" fill="#a8a800"/><rect x="264.0" y="669.6" width="2" height="2" fill="#a8a800"/><rect x="298.1" y="674.6" width="2" height="2" fill="#a8a800"/><rect x="335.5" y="695.7" width="2" height="2" fill="#a8a800"/><rect x="369.2" y="693.2" width="2" height="2" fill="#a8a800"/><rect x="416.7" y="558.1" width="2" height="2" fill="#a8a800"/><rect x="441.7" y="550.8" width="2" height="2" fill="#a8a800"/><rect x="509.0" y="568.2" width="2" height="2" fill="#a8a800"/><rect x="504.2" y="587.0" width="2" height="2" fill="#a8a800"/><rect x="481.7" y="612.0" width="2" height="2" fill="#a8a800"/><rect x="459.2" y="619.6" width="2" height="2" fill="#a8a800"/><rect x="452.9" y="623.1" width="2" height="2" fill="#a8a800"/><rect x="402.8" y="669.6" width="2" height="2" fill="#a8a800"/><rect x="400.5" y="684.5" width="2" height="2" fill="#a8a800"/><rect x="474.1" y="691.9" width="2" height="2" fill="#a8a800"/><rect x="436.7" y="706.8" width="2" height="2" fill="#a8a800"/><rect x="451.8" y="743.2" width="2" height="2" fill="#a8a800"/><rect x="585.3" y="550.8" width="2" height="2" fill="#a8a800"/><rect x="585.3" y="554.6" width="2" height="2" fill="#a8a800"/><rect x="596.7" y="559.4" width="2" height="2" fill="#a8a800"/><rect x="649.1" y="561.9" width="2" height="2" fill="#a8a800"/><rect x="671.8" y="565.7" width="2" height="2" fill="#a8a800"/><rect x="671.8" y="587.0" width="2" height="2" fill="#a8a800"/><rect x="581.8" y="609.7" width="2" height="2" fill="#a8a800"/><rect x="600.5" y="628.4" width="2" height="2" fill="#a8a800"/><rect x="677.9" y="625.9" width="2" height="2" fill="#a8a800"/><rect x="688.0" y="614.7" width="2" height="2" fill="#a8a800"/><rect x="731.7" y="598.3" width="2" height="2" fill="#a8a800"/><rect x="754.2" y="545.7" width="2" height="2" fill="#a8a800"/><rect x="521.6" y="644.8" width="2" height="2" fill="#a8a800"/><rect x="770.4" y="643.3" width="2" height="2" fill="#a8a800"/><rect x="589.1" y="710.8" width="2" height="2" fill="#a8a800"/><rect x="584.1" y="719.7" width="2" height="2" fill="#a8a800"/><rect x="607.9" y="718.2" width="2" height="2" fill="#a8a800"/><rect x="614.2" y="719.7" width="2" height="2" fill="#a8a800"/><rect x="554.0" y="729.5" width="2" height="2" fill="#a8a800"/><rect x="616.7" y="730.8" width="2" height="2" fill="#a8a800"/><rect x="594.2" y="743.2" width="2" height="2" fill="#a8a800"/><rect x="721.6" y="710.8" width="2" height="2" fill="#a8a800"/><rect x="770.4" y="743.2" width="2" height="2" fill="#a8a800"/><rect x="978.0" y="550.8" width="2" height="2" fill="#a8a800"/><rect x="835.4" y="558.4" width="2" height="2" fill="#a8a800"/><rect x="887.8" y="561.9" width="2" height="2" fill="#a8a800"/><rect x="882.9" y="576.9" width="2" height="2" fill="#a8a800"/><rect x="1012.9" y="590.7" width="2" height="2" fill="#a8a800"/><rect x="927.9" y="615.8" width="2" height="2" fill="#a8a800"/><rect x="852.8" y="623.3" width="2" height="2" fill="#a8a800"/><rect x="974.0" y="624.6" width="2" height="2" fill="#a8a800"/><rect x="1014.0" y="637.0" width="2" height="2" fill="#a8a800"/><rect x="1081.4" y="632.0" width="2" height="2" fill="#a8a800"/><rect x="846.7" y="644.6" width="2" height="2" fill="#a8a800"/><rect x="808.0" y="649.6" width="2" height="2" fill="#a8a800"/><rect x="1096.4" y="648.4" width="2" height="2" fill="#a8a800"/><rect x="820.2" y="669.6" width="2" height="2" fill="#a8a800"/><rect x="1031.6" y="670.9" width="2" height="2" fill="#a8a800"/><rect x="950.4" y="695.9" width="2" height="2" fill="#a8a800"/><rect x="968.9" y="707.0" width="2" height="2" fill="#a8a800"/><rect x="943.9" y="714.6" width="2" height="2" fill="#a8a800"/><rect x="1047.8" y="707.0" width="2" height="2" fill="#a8a800"/><rect x="1149.2" y="552.0" width="2" height="2" fill="#a8a800"/><rect x="1098.0" y="635.7" width="2" height="2" fill="#a8a800"/><rect x="1212.7" y="635.7" width="2" height="2" fill="#a8a800"/><rect x="1225.3" y="625.9" width="2" height="2" fill="#a8a800"/><rect x="1304.0" y="589.5" width="2" height="2" fill="#a8a800"/><rect x="1334.2" y="593.3" width="2" height="2" fill="#a8a800"/><rect x="1365.4" y="568.2" width="2" height="2" fill="#a8a800"/><rect x="1375.2" y="589.5" width="2" height="2" fill="#a8a800"/><rect x="1372.9" y="600.8" width="2" height="2" fill="#a8a800"/><rect x="1301.6" y="610.7" width="2" height="2" fill="#a8a800"/><rect x="1330.2" y="635.7" width="2" height="2" fill="#a8a800"/><rect x="1296.6" y="640.8" width="2" height="2" fill="#a8a800"/><rect x="1317.8" y="645.8" width="2" height="2" fill="#a8a800"/><rect x="1243.0" y="665.8" width="2" height="2" fill="#a8a800"/><rect x="1355.3" y="688.1" width="2" height="2" fill="#a8a800"/><rect x="1367.9" y="674.6" width="2" height="2" fill="#a8a800"/><rect x="1375.2" y="689.6" width="2" height="2" fill="#a8a800"/><rect x="1252.8" y="708.3" width="2" height="2" fill="#a8a800"/><rect x="1347.9" y="727.0" width="2" height="2" fill="#a8a800"/><rect x="1330.2" y="732.1" width="2" height="2" fill="#a8a800"/><rect x="1244.0" y="740.9" width="2" height="2" fill="#a8a800"/><rect x="1144.1" y="748.3" width="2" height="2" fill="#a8a800"/><rect x="234.4" y="773.3" width="2" height="2" fill="#a8a800"/><rect x="297.9" y="778.3" width="2" height="2" fill="#a8a800"/><rect x="297.9" y="787.2" width="2" height="2" fill="#a8a800"/><rect x="361.8" y="765.9" width="2" height="2" fill="#a8a800"/><rect x="347.9" y="805.9" width="2" height="2" fill="#a8a800"/><rect x="250.6" y="829.7" width="2" height="2" fill="#a8a800"/><rect x="244.2" y="833.4" width="2" height="2" fill="#a8a800"/><rect x="281.7" y="838.3" width="2" height="2" fill="#a8a800"/><rect x="364.1" y="842.1" width="2" height="2" fill="#a8a800"/><rect x="295.3" y="859.7" width="2" height="2" fill="#a8a800"/><rect x="345.4" y="873.4" width="2" height="2" fill="#a8a800"/><rect x="272.8" y="882.2" width="2" height="2" fill="#a8a800"/><rect x="325.4" y="904.7" width="2" height="2" fill="#a8a800"/><rect x="237.9" y="925.8" width="2" height="2" fill="#a8a800"/><rect x="297.9" y="946.0" width="2" height="2" fill="#a8a800"/><rect x="266.7" y="954.6" width="2" height="2" fill="#a8a800"/><rect x="444.2" y="753.3" width="2" height="2" fill="#a8a800"/><rect x="416.7" y="844.6" width="2" height="2" fill="#a8a800"/><rect x="487.8" y="854.7" width="2" height="2" fill="#a8a800"/><rect x="479.2" y="872.1" width="2" height="2" fill="#a8a800"/><rect x="491.6" y="879.7" width="2" height="2" fill="#a8a800"/><rect x="509.0" y="952.3" width="2" height="2" fill="#a8a800"/><rect x="589.1" y="759.8" width="2" height="2" fill="#a8a800"/><rect x="546.7" y="793.5" width="2" height="2" fill="#a8a800"/><rect x="615.4" y="812.0" width="2" height="2" fill="#a8a800"/><rect x="628.0" y="814.5" width="2" height="2" fill="#a8a800"/><rect x="591.7" y="820.8" width="2" height="2" fill="#a8a800"/><rect x="598.0" y="836.0" width="2" height="2" fill="#a8a800"/><rect x="607.9" y="860.8" width="2" height="2" fill="#a8a800"/><rect x="672.8" y="857.2" width="2" height="2" fill="#a8a800"/><rect x="629.1" y="885.8" width="2" height="2" fill="#a8a800"/><rect x="607.9" y="909.8" width="2" height="2" fill="#a8a800"/><rect x="571.7" y="925.8" width="2" height="2" fill="#a8a800"/><rect x="757.8" y="764.7" width="2" height="2" fill="#a8a800"/><rect x="717.8" y="805.9" width="2" height="2" fill="#a8a800"/><rect x="764.1" y="823.6" width="2" height="2" fill="#a8a800"/><rect x="691.6" y="875.9" width="2" height="2" fill="#a8a800"/><rect x="779.0" y="882.2" width="2" height="2" fill="#a8a800"/><rect x="802.8" y="858.5" width="2" height="2" fill="#a8a800"/><rect x="688.0" y="915.9" width="2" height="2" fill="#a8a800"/><rect x="760.3" y="953.5" width="2" height="2" fill="#a8a800"/><rect x="880.4" y="767.0" width="2" height="2" fill="#a8a800"/><rect x="852.8" y="816.0" width="2" height="2" fill="#a8a800"/><rect x="852.8" y="825.9" width="2" height="2" fill="#a8a800"/><rect x="825.5" y="882.2" width="2" height="2" fill="#a8a800"/><rect x="810.4" y="899.7" width="2" height="2" fill="#a8a800"/><rect x="877.9" y="905.8" width="2" height="2" fill="#a8a800"/><rect x="898.9" y="895.9" width="2" height="2" fill="#a8a800"/><rect x="926.7" y="884.8" width="2" height="2" fill="#a8a800"/><rect x="894.3" y="923.5" width="2" height="2" fill="#a8a800"/><rect x="950.4" y="904.7" width="2" height="2" fill="#a8a800"/><rect x="864.0" y="949.7" width="2" height="2" fill="#a8a800"/><rect x="1052.8" y="761.9" width="2" height="2" fill="#a8a800"/><rect x="992.9" y="799.8" width="2" height="2" fill="#a8a800"/><rect x="970.2" y="816.0" width="2" height="2" fill="#a8a800"/><rect x="1027.8" y="836.0" width="2" height="2" fill="#a8a800"/><rect x="971.7" y="845.8" width="2" height="2" fill="#a8a800"/><rect x="1077.9" y="869.8" width="2" height="2" fill="#a8a800"/><rect x="1061.7" y="908.3" width="2" height="2" fill="#a8a800"/><rect x="1080.4" y="933.3" width="2" height="2" fill="#a8a800"/><rect x="1113.0" y="778.3" width="2" height="2" fill="#a8a800"/><rect x="1156.7" y="798.3" width="2" height="2" fill="#a8a800"/><rect x="1250.3" y="807.2" width="2" height="2" fill="#a8a800"/><rect x="1265.2" y="802.1" width="2" height="2" fill="#a8a800"/><rect x="1304.2" y="819.8" width="2" height="2" fill="#a8a800"/><rect x="1380.3" y="814.7" width="2" height="2" fill="#a8a800"/><rect x="1198.0" y="844.6" width="2" height="2" fill="#a8a800"/><rect x="1215.4" y="842.1" width="2" height="2" fill="#a8a800"/><rect x="1289.0" y="845.8" width="2" height="2" fill="#a8a800"/><rect x="1312.8" y="865.8" width="2" height="2" fill="#a8a800"/><rect x="1361.6" y="875.9" width="2" height="2" fill="#a8a800"/><rect x="1116.6" y="859.7" width="2" height="2" fill="#a8a800"/><rect x="1115.5" y="885.8" width="2" height="2" fill="#a8a800"/><rect x="1144.1" y="889.6" width="2" height="2" fill="#a8a800"/><rect x="1198.0" y="898.4" width="2" height="2" fill="#a8a800"/><rect x="1124.1" y="920.9" width="2" height="2" fill="#a8a800"/><rect x="1159.0" y="946.0" width="2" height="2" fill="#a8a800"/><rect x="1085.2" y="187.0" width="2" height="2" fill="#d0d0d0"/><rect x="1119.0" y="438.0" width="2" height="2" fill="#d0d0d0"/><rect x="1209.1" y="535.8" width="2" height="2" fill="#d0d0d0"/><rect x="525.4" y="499.5" width="2" height="2" fill="#d0d0d0"/><rect x="382.6" y="578.3" width="2" height="2" fill="#d0d0d0"/><rect x="495.4" y="690.8" width="2" height="2" fill="#d0d0d0"/><rect x="612.9" y="674.7" width="2" height="2" fill="#d0d0d0"/><rect x="316.8" y="890.9" width="2" height="2" fill="#d0d0d0"/><rect x="463.0" y="844.6" width="2" height="2" fill="#d0d0d0"/><rect x="606.8" y="863.5" width="2" height="2" fill="#d0d0d0"/><rect x="1181.5" y="760.9" width="2" height="2" fill="#d0d0d0"/><rect x="1135.5" y="463.5" width="4" height="4" fill="#fff"/><rect x="428.3" y="131.9" width="4" height="4" fill="#ffff00"/><rect x="247.0" y="205.9" width="4" height="4" fill="#ffff00"/><rect x="418.0" y="264.8" width="4" height="4" fill="#ffff00"/><rect x="607.0" y="157.0" width="4" height="4" fill="#ffff00"/><rect x="658.2" y="175.8" width="4" height="4" fill="#ffff00"/><rect x="648.0" y="312.1" width="4" height="4" fill="#ffff00"/><rect x="865.7" y="268.4" width="4" height="4" fill="#ffff00"/><rect x="1351.7" y="164.5" width="4" height="4" fill="#ffff00"/><rect x="1244.3" y="272.2" width="4" height="4" fill="#ffff00"/><rect x="1314.3" y="314.6" width="4" height="4" fill="#ffff00"/><rect x="287.0" y="406.0" width="4" height="4" fill="#ffff00"/><rect x="891.8" y="431.0" width="4" height="4" fill="#ffff00"/><rect x="1098.1" y="353.6" width="4" height="4" fill="#ffff00"/><rect x="1275.6" y="468.4" width="4" height="4" fill="#ffff00"/><rect x="284.5" y="602.4" width="4" height="4" fill="#ffff00"/><rect x="366.9" y="640.8" width="4" height="4" fill="#ffff00"/><rect x="285.7" y="718.7" width="4" height="4" fill="#ffff00"/><rect x="456.9" y="681.0" width="4" height="4" fill="#ffff00"/><rect x="499.4" y="722.2" width="4" height="4" fill="#ffff00"/><rect x="646.8" y="647.4" width="4" height="4" fill="#ffff00"/><rect x="1020.7" y="599.8" width="4" height="4" fill="#ffff00"/><rect x="1296.8" y="612.2" width="4" height="4" fill="#ffff00"/><rect x="1375.5" y="637.3" width="4" height="4" fill="#ffff00"/><rect x="1128.0" y="737.4" width="4" height="4" fill="#ffff00"/><rect x="260.9" y="791.2" width="4" height="4" fill="#ffff00"/><rect x="324.4" y="856.2" width="4" height="4" fill="#ffff00"/><rect x="1296.8" y="810.0" width="4" height="4" fill="#ffff00"/><rect x="1345.6" y="787.4" width="4" height="4" fill="#ffff00"/><rect x="1370.4" y="812.5" width="4" height="4" fill="#ffff00"/><rect x="784.4" y="537.5" width="4" height="4" fill="#ffff00"/><rect x="1254.1" y="955.0" width="4" height="4" fill="#ffff00"/><ellipse cx="389.5" cy="278" rx="3.0999999999999996" ry="2.8" fill="#ffff00"/><ellipse cx="728.3" cy="302.1" rx="3.0" ry="2.7" fill="#ffff00"/><ellipse cx="624" cy="315.8" rx="3.3" ry="3" fill="#ffff00"/><ellipse cx="709.4" cy="318.5" rx="3.0" ry="2.7" fill="#ffff00"/><ellipse cx="1018.3" cy="279.4" rx="3.0" ry="2.7" fill="#ffff00"/><ellipse cx="450.3" cy="512.2" rx="3.3" ry="3" fill="#ffff00"/><ellipse cx="650.7" cy="443.7" rx="3.0" ry="2.7" fill="#ffff00"/><ellipse cx="610.7" cy="448.5" rx="3.0" ry="2.7" fill="#ffff00"/><ellipse cx="909.6" cy="512.2" rx="3.0" ry="2.7" fill="#ffff00"/><ellipse cx="654.1" cy="545" rx="3.0" ry="2.7" fill="#ffff00"/><ellipse cx="768.3" cy="676.1" rx="3.0" ry="2.7" fill="#ffff00"/><circle cx="674.3" cy="381" r="5.2" fill="#ffff00"/><circle cx="850" cy="384.4" r="5.6" fill="#ffff00"/><circle cx="320.1" cy="550.7" r="4.8" fill="#ffff00"/><circle cx="785.1" cy="584.4" r="4.8" fill="#ffff00"/><circle cx="1343.6" cy="367.5" r="7.3" fill="#ffff00" stroke="#ff2000" stroke-width="1.3"/></g><text x="786" y="148.8" font-family="Liberation Sans" font-size="13" fill="#a8a8a8" letter-spacing="-0.3">IMX174</text><text x="786" y="233.8" font-family="Liberation Sans" font-size="13" fill="#a8a8a8" letter-spacing="-0.3">IMX430</text><rect x="294.3" y="242.9" width="32" height="15.8" fill="#000" stroke="#606060" stroke-width="1.6"/><text x="295.8" y="256.6" font-family="Liberation Sans" font-size="14.6" fill="#e8e070" letter-spacing="-0.75">3°20'</text><rect x="294.3" y="438.0" width="32" height="15.8" fill="#000" stroke="#606060" stroke-width="1.6"/><text x="295.8" y="451.70000000000005" font-family="Liberation Sans" font-size="14.6" fill="#e8e070" letter-spacing="-0.75">3°30'</text><rect x="294.3" y="633.9" width="32" height="15.8" fill="#000" stroke="#606060" stroke-width="1.6"/><text x="295.8" y="647.6" font-family="Liberation Sans" font-size="14.6" fill="#e8e070" letter-spacing="-0.75">3°40'</text><rect x="294.3" y="829.6" width="32" height="15.8" fill="#000" stroke="#606060" stroke-width="1.6"/><text x="295.8" y="843.3000000000001" font-family="Liberation Sans" font-size="14.6" fill="#e8e070" letter-spacing="-0.75">3°50'</text><rect x="351.5" y="930.5" width="64.10000000000002" height="15.6" fill="#000" stroke="#606060" stroke-width="1.6"/><text x="354.1" y="944" font-family="Liberation Sans" font-size="13.8" fill="#d0d8e8" letter-spacing="-0.45">3h45m30s</text><rect x="509" y="930.5" width="43" height="15.6" fill="#000" stroke="#606060" stroke-width="1.6"/><text x="511.6" y="944" font-family="Liberation Sans" font-size="13.8" fill="#d0d8e8" letter-spacing="-0.45">3h45m</text><rect x="643.6" y="930.5" width="66.0" height="15.6" fill="#000" stroke="#606060" stroke-width="1.6"/><text x="646.2" y="944" font-family="Liberation Sans" font-size="13.8" fill="#d0d8e8" letter-spacing="-0.45">3h44m30s</text><rect x="801.6" y="930.5" width="43.0" height="15.6" fill="#000" stroke="#606060" stroke-width="1.6"/><text x="804.2" y="944" font-family="Liberation Sans" font-size="13.8" fill="#d0d8e8" letter-spacing="-0.45">3h44m</text><rect x="936" y="930.5" width="65.39999999999998" height="15.6" fill="#000" stroke="#606060" stroke-width="1.6"/><text x="938.6" y="944" font-family="Liberation Sans" font-size="13.8" fill="#d0d8e8" letter-spacing="-0.45">3h43m30s</text><rect x="1093.5" y="930.5" width="43.0" height="15.6" fill="#000" stroke="#606060" stroke-width="1.6"/><text x="1096.1" y="944" font-family="Liberation Sans" font-size="13.8" fill="#d0d8e8" letter-spacing="-0.45">3h43m</text><rect x="1228" y="930.5" width="66.40000000000009" height="15.6" fill="#000" stroke="#606060" stroke-width="1.6"/><text x="1230.6" y="944" font-family="Liberation Sans" font-size="13.8" fill="#d0d8e8" letter-spacing="-0.45">3h42m30s</text><rect x="228" y="128" width="40" height="40" fill="#000"/><circle cx="247.7" cy="147.7" r="15.9" fill="#000080" stroke="#b8b8c8" stroke-width="1.2"/><path d="M232 147.7H247.7" stroke="#c05078" stroke-width="1.6"/><path d="M247.7 147.7V164" stroke="#c8c060" stroke-width="1.4"/><path d="M247.7 128.5l-3 3.3h6zM247.7 167.2l-3-3.3h6zM228.3 147.7l3.3-3v6zM267.2 147.7l-3.3-3v6z" fill="#00f0f0"/><rect x="273.5" y="131" width="51" height="17.3" fill="#ffc0c0"/><text x="285.3" y="145" font-family="Liberation Sans" font-size="14.5" fill="#a01818" letter-spacing="-0.3">Field</text><rect x="327.3" y="131" width="51.1" height="17.3" fill="#808080"/><text x="330" y="145" font-family="Liberation Sans" font-size="14.3" fill="#e0e0e0" letter-spacing="-0.7">Horizon</text><rect x="1284.3" y="132.3" width="46.2" height="15" fill="#808080"/><text x="1286.3" y="145.3" font-family="Liberation Sans" font-size="13" fill="#e8e080" letter-spacing="-0.5">UCAC4</text><rect x="1332" y="132.3" width="53.5" height="15" fill="#008000"/><text x="1334" y="145.3" font-family="Liberation Sans" font-size="13" fill="#e8e060" letter-spacing="-0.4">RNGCIC</text><path d="M830 545.7H1180" stroke="#8a8a8a" stroke-width="1.2"/><path d="M1180 526V546" stroke="#8a8a8a" stroke-width="1.2"/><path d="M1180 542.8L1182.4 545.6L1180 548.4L1177.6 545.6Z" fill="#00f000"/><text x="663.5" y="521" font-family="Liberation Sans" font-weight="bold" font-size="13.6" fill="#c8d4e4" letter-spacing="-0.15">09/12/2023 00:54:16 UT</text><text x="1180" y="521" font-family="Liberation Sans" font-weight="bold" font-size="13.6" fill="#c8d4e4" letter-spacing="-0.35">00:53</text><path d="M806.6 516.3L810.3 519.8L808.4 536H804.8L802.9 519.8Z" fill="#f04848"/><path d="M806.6 572.4L810.3 568L808.4 554.5H804.8L802.9 568Z" fill="#f04848"/><path d="M778.3 545.1L782.8 541L798.5 543.3V546.9L782.8 549Z" fill="#f04848"/><path d="M834.4 545.1L830.2 541L817.5 543.3V546.9L830.2 549Z" fill="#f04848"/><path d="M806.6 524V567M785 545.2H828" stroke="#10a050" stroke-width="1.1"/><circle cx="808" cy="545" r="9.6" fill="#000" stroke="#c4c4c4" stroke-width="2"/><path d="M801.5 540.5h8.5v3h2v4h-2v3h-8.5v-3h-1.5v-4h1.5z" fill="#fff"/><path d="M812.5 538.5l2 1.5M813.5 551l1.5-1.5M803 551.5l1.5 1.5" stroke="#303030" stroke-width="1.6"/><path d="M813.5 550l2.5 2.5" stroke="#40b0c0" stroke-width="1.3"/><circle cx="808.7" cy="545.6" r="1.6" fill="#00e000"/><circle cx="806.6" cy="536" r="0.9" fill="#e000e0"/><circle cx="806.6" cy="554" r="0.9" fill="#e000e0"/><circle cx="799" cy="545.4" r="0.9" fill="#e000e0"/><circle cx="817" cy="545.4" r="0.9" fill="#e000e0"/></svg>
<div style="left:2.5px;top:964.3px;width:220.5px;height:22.5px;background:#f0f0f0;border-top:2px solid #8c8c8c;border-left:2px solid #8c8c8c;border-bottom:1px solid #fff;border-right:1px solid #fff;box-sizing:border-box"></div>
<span style="left:7px;top:967.57px;font-size:15.5px;color:#000;font-weight:normal;letter-spacing:-0.9px">Ready</span>
<span style="left:228px;top:967.83px;font-size:14px;color:#000;font-weight:normal;letter-spacing:-0.6px">RA:</span>
<div style="left:251px;top:964px;width:22px;height:23px;background:#f0f0f0;border-top:2px solid #8c8c8c;border-left:2px solid #8c8c8c;border-bottom:1px solid #fff;border-right:1px solid #fff;box-sizing:border-box"></div>
<span style="left:255px;top:967.30px;font-size:15.8px;color:#a01010;font-weight:normal;letter-spacing:-0.9px">03</span>
<div style="left:273px;top:964px;width:24px;height:23px;background:#f0f0f0;border-top:2px solid #8c8c8c;border-left:2px solid #8c8c8c;border-bottom:1px solid #fff;border-right:1px solid #fff;box-sizing:border-box"></div>
<span style="left:277px;top:967.30px;font-size:15.8px;color:#a01010;font-weight:normal;letter-spacing:-0.9px">44</span>
<div style="left:297px;top:964px;width:23px;height:23px;background:#f0f0f0;border-top:2px solid #8c8c8c;border-left:2px solid #8c8c8c;border-bottom:1px solid #fff;border-right:1px solid #fff;box-sizing:border-box"></div>
<span style="left:301px;top:967.30px;font-size:15.8px;color:#a01010;font-weight:normal;letter-spacing:-0.9px">03</span>
<span style="left:328px;top:967.83px;font-size:14px;color:#000;font-weight:normal;letter-spacing:-0.6px">DE:</span>
<div style="left:352px;top:964px;width:31px;height:23px;background:#f0f0f0;border-top:2px solid #8c8c8c;border-left:2px solid #8c8c8c;border-bottom:1px solid #fff;border-right:1px solid #fff;box-sizing:border-box"></div>
<span style="left:356px;top:967.30px;font-size:15.8px;color:#a01010;font-weight:normal;letter-spacing:-0.9px">+03</span>
<div style="left:383px;top:964px;width:23px;height:23px;background:#f0f0f0;border-top:2px solid #8c8c8c;border-left:2px solid #8c8c8c;border-bottom:1px solid #fff;border-right:1px solid #fff;box-sizing:border-box"></div>
<span style="left:387px;top:967.30px;font-size:15.8px;color:#a01010;font-weight:normal;letter-spacing:-0.9px">35</span>
<div style="left:406px;top:964px;width:23px;height:23px;background:#f0f0f0;border-top:2px solid #8c8c8c;border-left:2px solid #8c8c8c;border-bottom:1px solid #fff;border-right:1px solid #fff;box-sizing:border-box"></div>
<span style="left:410px;top:967.30px;font-size:15.8px;color:#a01010;font-weight:normal;letter-spacing:-0.9px">01</span>
<span style="left:433px;top:967.83px;font-size:14px;color:#000;font-weight:normal;letter-spacing:-0.6px">Field:</span>
<div style="left:467px;top:964px;width:31px;height:23px;background:#f0f0f0;border-top:2px solid #8c8c8c;border-left:2px solid #8c8c8c;border-bottom:1px solid #fff;border-right:1px solid #fff;box-sizing:border-box"></div>
<span style="left:478.5px;top:967.30px;font-size:15.8px;color:#a01010;font-weight:normal;letter-spacing:-0.9px">00</span>
<div style="left:498px;top:964px;width:23px;height:23px;background:#f0f0f0;border-top:2px solid #8c8c8c;border-left:2px solid #8c8c8c;border-bottom:1px solid #fff;border-right:1px solid #fff;box-sizing:border-box"></div>
<span style="left:501.5px;top:967.30px;font-size:15.8px;color:#a01010;font-weight:normal;letter-spacing:-0.9px">58</span>
<div style="left:521px;top:964px;width:23px;height:23px;background:#f0f0f0;border-top:2px solid #8c8c8c;border-left:2px solid #8c8c8c;border-bottom:1px solid #fff;border-right:1px solid #fff;box-sizing:border-box"></div>
<span style="left:524.5px;top:967.30px;font-size:15.8px;color:#a01010;font-weight:normal;letter-spacing:-0.9px">59</span>
<svg style="position:absolute;left:0px;top:0px" width="1393" height="989" viewBox="0 0 1393 989"><circle cx="557.5" cy="975.5" r="7.3" fill="#10e010" stroke="#208020" stroke-width="0.8"/><path d="M553.5 973.5l3-3" stroke="#fff" stroke-width="1.5"/><circle cx="575" cy="975.5" r="7.3" fill="#10e010" stroke="#208020" stroke-width="0.8"/><path d="M571 973.5l3-3" stroke="#fff" stroke-width="1.5"/><rect x="589.5" y="963" width="129.5" height="14" fill="#ff0000"/><text x="592" y="975.3" font-family="Liberation Sans" font-weight="bold" font-size="13.2" fill="#ffff40" letter-spacing="-0.1">09/12/2023 00:54:16</text><text x="603" y="986" font-family="Liberation Sans" font-size="10.5" fill="#202020" letter-spacing="-0.05">+8°28'23'' / +47°20'31''</text><ellipse cx="735.2" cy="973.8" rx="9.8" ry="10" fill="#000080"/><path d="M759 965.8H788M795 965.8H825" stroke="#909090" stroke-width="1.6"/><path d="M759 964.8H825" stroke="#d8d8d8" stroke-width="0.6"/><path d="M792.5 964v7" stroke="#909090" stroke-width="1.6"/><path d="M762 978.3H825" stroke="#909090" stroke-width="1.6"/><path d="M762 977.3H825" stroke="#d8d8d8" stroke-width="0.6"/><path d="M763 976v9" stroke="#909090" stroke-width="1.6"/></svg>
<div style="left:838px;top:963px;width:24px;height:24px;background:#c8ffc8;border-top:1px solid #fff;border-left:1px solid #fff;border-bottom:2px solid #909090;border-right:2px solid #909090;box-sizing:border-box"></div>
<div style="left:862px;top:963px;width:24px;height:24px;background:#c8ffc8;border-top:1px solid #fff;border-left:1px solid #fff;border-bottom:2px solid #909090;border-right:2px solid #909090;box-sizing:border-box"></div>
<svg style="position:absolute;left:0px;top:0px" width="1393" height="989" viewBox="0 0 1393 989"><path d="M844 974.5H856M850 968.5V980.5" stroke="#000080" stroke-width="2.6"/><path d="M868 974.5H880" stroke="#000080" stroke-width="2.6"/></svg>
<div style="left:889px;top:963px;width:101px;height:24px;background:#e0e0e0"></div>
<span style="left:890.5px;top:963.92px;font-size:11.8px;color:#a01010;font-weight:normal;letter-spacing:-0.3px">JD: 2460199.53769</span>
<span style="left:890.5px;top:974.92px;font-size:11.8px;color:#a01010;font-weight:normal;letter-spacing:-0.3px">ST: 00:51:17</span>
<div style="left:1239px;top:964px;width:148px;height:23px;background:#f0f0f0;border-top:2px solid #8c8c8c;border-left:2px solid #8c8c8c;border-bottom:1px solid #fff;border-right:1px solid #fff;box-sizing:border-box"></div>
<span style="left:1242px;top:968.42px;font-size:15px;color:#006000;font-weight:normal;letter-spacing:-0.75px">03h45m47s  +03°49'00''</span>
<div style="left:1px;top:126px;width:1px;height:861px;background:#fafafa"></div>
</div></body></html>
